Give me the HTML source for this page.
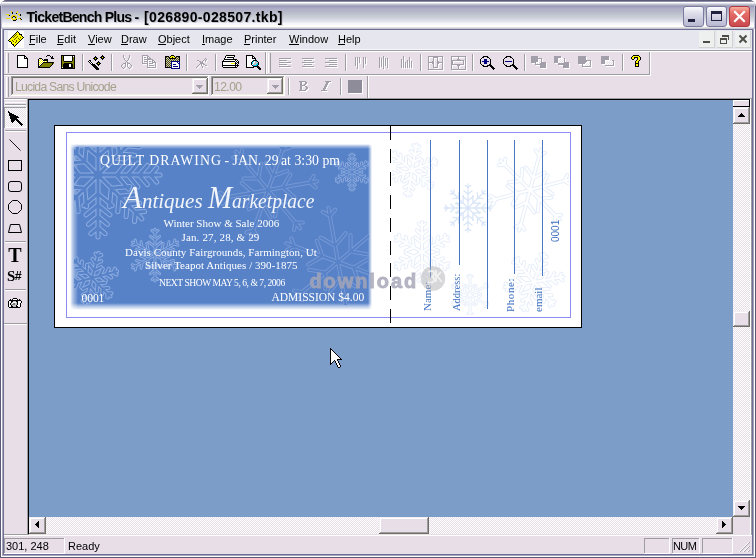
<!DOCTYPE html>
<html><head><meta charset="utf-8">
<style>
*{margin:0;padding:0;box-sizing:border-box}
html,body{width:756px;height:558px;overflow:hidden;background:#fff}
body{position:relative;will-change:transform;font-family:"Liberation Sans",sans-serif;font-size:11px;color:#000}
.a{position:absolute}
.px{position:absolute;overflow:visible}
svg{position:absolute;overflow:visible}
.mi{position:absolute;top:33px;font-size:11px;line-height:13px;color:#000;white-space:nowrap}
.dither{background-color:#FFFFFF;background-image:linear-gradient(45deg,#E8DEE8 25%,transparent 25%,transparent 75%,#E8DEE8 75%),linear-gradient(45deg,#E8DEE8 25%,transparent 25%,transparent 75%,#E8DEE8 75%);background-size:2px 2px;background-position:0 0,1px 1px}
.tk{position:absolute;white-space:nowrap;color:#fff;font-family:"Liberation Serif",serif;line-height:1}
</style></head><body>
<div class="a" style="left:0px;top:0px;width:756px;height:558px;background:#5A5A78;border-radius:7px 7px 0 0"></div><div class="a" style="left:0;top:0;width:756px;height:29px;border-radius:7px 7px 0 0;background:linear-gradient(to bottom,#5C5C78 0px,#5C5C78 1px,#8C8CA4 1px,#8C8CA4 2px,#FFFFFF 2px,#FFFFFF 3px,#DCE0EA 3px,#DCE0EA 4px,#C2C2CE 4px,#C2C2CE 5px,#A8A8BA 5px,#A8A8BA 6px,#9C9CBC 6px,#9C9CBC 7px,#A6A6C4 7px,#A6A6C4 8px,#ACACC6 8px,#ACACC6 9px,#B0B0C8 9px,#B0B0C8 10px,#B4B4C6 10px,#B4B4C6 11px,#B6B6C8 11px,#B6B6C8 12px,#B8BCCC 12px,#B8BCCC 13px,#BCC0CC 13px,#BCC0CC 14px,#C0C4CC 14px,#C0C4CC 15px,#C4C8D0 15px,#C4C8D0 16px,#C8CCD4 16px,#C8CCD4 17px,#CCCEDA 17px,#CCCEDA 18px,#D0D4DC 18px,#D0D4DC 19px,#D8DCE4 19px,#D8DCE4 20px,#DCDCE8 20px,#DCDCE8 21px,#E4E4EE 21px,#E4E4EE 22px,#ECECF4 22px,#ECECF4 23px,#F6F6F8 23px,#F6F6F8 24px,#F8F8FC 24px,#F8F8FC 25px,#FFFFFF 25px,#FFFFFF 26px,#FFFFFF 26px,#FFFFFF 27px,#E0E0DE 27px,#E0E0DE 28px,#C6C6D4 28px,#C6C6D4 29px)"></div><div class="a" style="left:1px;top:29px;width:1px;height:528px;background:#FFFFFF;"></div><div class="a" style="left:2px;top:29px;width:1px;height:527px;background:#A6A6BE;"></div><div class="a" style="left:754px;top:29px;width:1px;height:528px;background:#FFFFFF;"></div><div class="a" style="left:753px;top:29px;width:1px;height:527px;background:#A6A6BE;"></div><div class="a" style="left:1px;top:556px;width:754px;height:1px;background:#FFFFFF;"></div><div class="a" style="left:2px;top:555px;width:752px;height:1px;background:#A6A6BE;"></div><div class="a" style="left:3px;top:29px;width:750px;height:526px;background:#707094;"></div><div class="a" style="left:0px;top:6px;width:1px;height:23px;background:#5C5C78;"></div><div class="a" style="left:755px;top:6px;width:1px;height:23px;background:#5C5C78;"></div><div class="a" style="left:1px;top:4px;width:1px;height:25px;background:#C0C0D2;"></div><div class="a" style="left:754px;top:4px;width:1px;height:25px;background:#C0C0D2;"></div><svg class="px" style="left:6px;top:11px" width="16" height="10" shape-rendering="crispEdges"><path fill="#F0D800" d="M5 0h1v1h-1zM11 0h1v1h-1zM5 1h1v1h-1zM10 1h2v1h-2zM0 3h3v1h-3zM12 3h2v1h-2zM2 4h1v1h-1zM6 4h4v1h-4zM13 4h1v1h-1zM5 5h2v1h-2zM9 5h2v1h-2zM5 6h1v1h-1zM10 6h1v1h-1zM0 7h4v1h-4zM5 7h2v1h-2zM9 7h2v1h-2zM12 7h2v1h-2zM6 8h4v1h-4zM14 8h1v1h-1z"/><path fill="#000000" d="M6 1h1v1h-1zM6 2h1v1h-1zM10 2h1v1h-1zM14 3h1v1h-1zM3 4h1v1h-1zM14 4h1v1h-1zM7 5h2v1h-2zM6 6h1v1h-1zM9 6h1v1h-1zM14 7h1v1h-1zM10 8h1v1h-1zM15 8h1v1h-1zM7 9h3v1h-3z"/></svg><div class="a" style="left:26.5px;top:8px;font-size:14px;letter-spacing:-0.72px;font-weight:bold;line-height:18px;white-space:nowrap;text-shadow:1px 1px 0 rgba(60,60,90,0.18)">TicketBench Plus</div><div class="a" style="left:134.5px;top:8px;font-size:14px;font-weight:bold;line-height:18px;white-space:nowrap;text-shadow:1px 1px 0 rgba(60,60,90,0.18)">-</div><div class="a" style="left:144px;top:8px;font-size:14px;letter-spacing:0.34px;font-weight:bold;line-height:18px;white-space:nowrap;text-shadow:1px 1px 0 rgba(60,60,90,0.18)">[026890-028507.tkb]</div><div class="a" style="left:683px;top:6px;width:21px;height:21px;border-radius:3px;border:1px solid #7A7AA0;background:linear-gradient(to bottom,#FAFAFE 0%,#E0E0EC 30%,#C8C8DC 70%,#B8B8D0 100%)"></div><div class="a" style="left:706px;top:6px;width:21px;height:21px;border-radius:3px;border:1px solid #7A7AA0;background:linear-gradient(to bottom,#FAFAFE 0%,#E0E0EC 30%,#C8C8DC 70%,#B8B8D0 100%)"></div><div class="a" style="left:688px;top:19px;width:7px;height:3px;background:#22223E;"></div><div class="a" style="left:711px;top:11px;width:11px;height:10px;border:1px solid #22223E;border-top-width:3px"></div><div class="a" style="left:729px;top:6px;width:21px;height:21px;border-radius:3px;border:1px solid #B03840;background:linear-gradient(to bottom,#F8B0A0 0%,#E6706A 30%,#D65858 70%,#C84A4E 100%)"></div><svg style="left:729px;top:6px" width="21" height="21"><path d="M6 6 L15 15 M15 6 L6 15" stroke="#fff" stroke-width="2.2" stroke-linecap="square"/></svg><div class="a" style="left:4px;top:30px;width:748px;height:19px;background:#E6E6EE;"></div><div class="a" style="left:4px;top:49px;width:748px;height:1px;background:#F8F8FB;"></div><div class="a" style="left:8px;top:31px;width:16px;height:17px;background:#FDFDFF;"></div><svg class="px" style="left:8px;top:31px" width="16" height="16" shape-rendering="crispEdges"><path fill="#000000" d="M9 0h1v1h-1zM8 1h1v1h-1zM10 1h1v1h-1zM7 2h1v1h-1zM11 2h1v1h-1zM6 3h1v1h-1zM11 3h3v1h-3zM5 4h1v1h-1zM13 4h1v1h-1zM4 5h1v1h-1zM14 5h1v1h-1zM3 6h1v1h-1zM15 6h1v1h-1zM2 7h1v1h-1zM14 7h1v1h-1zM1 8h1v1h-1zM13 8h1v1h-1zM0 9h1v1h-1zM12 9h1v1h-1zM1 10h2v1h-2zM11 10h1v1h-1zM3 11h1v1h-1zM10 11h1v1h-1zM3 12h1v1h-1zM9 12h1v1h-1zM4 13h2v1h-2zM8 13h1v1h-1zM5 14h1v1h-1zM7 14h1v1h-1zM6 15h1v1h-1z"/><path fill="#FFFF00" d="M9 1h1v1h-1zM8 2h3v1h-3zM7 3h1v1h-1zM9 3h2v1h-2zM6 4h1v1h-1zM8 4h5v1h-5zM5 5h1v1h-1zM7 5h2v1h-2zM10 5h4v1h-4zM4 6h1v1h-1zM6 6h2v1h-2zM9 6h3v1h-3zM13 6h2v1h-2zM3 7h4v1h-4zM8 7h2v1h-2zM11 7h3v1h-3zM2 8h4v1h-4zM7 8h4v1h-4zM12 8h1v1h-1zM1 9h3v1h-3zM5 9h3v1h-3zM9 9h3v1h-3zM3 10h2v1h-2zM6 10h2v1h-2zM9 10h2v1h-2zM4 11h3v1h-3zM8 11h2v1h-2zM4 12h5v1h-5zM6 13h2v1h-2zM6 14h1v1h-1z"/><path fill="#5A5600" d="M8 3h1v1h-1zM7 4h1v1h-1zM6 5h1v1h-1zM9 5h1v1h-1zM5 6h1v1h-1zM8 6h1v1h-1zM12 6h1v1h-1zM7 7h1v1h-1zM10 7h1v1h-1zM6 8h1v1h-1zM11 8h1v1h-1zM4 9h1v1h-1zM8 9h1v1h-1zM5 10h1v1h-1zM8 10h1v1h-1zM7 11h1v1h-1z"/></svg><div class="mi" style="left:29px">File</div><div class="a" style="left:29px;top:44px;width:6px;height:1px;background:#000;"></div><div class="mi" style="left:57px">Edit</div><div class="a" style="left:57px;top:44px;width:6px;height:1px;background:#000;"></div><div class="mi" style="left:88px">View</div><div class="a" style="left:88px;top:44px;width:7px;height:1px;background:#000;"></div><div class="mi" style="left:121px">Draw</div><div class="a" style="left:121px;top:44px;width:7px;height:1px;background:#000;"></div><div class="mi" style="left:158px">Object</div><div class="a" style="left:158px;top:44px;width:8px;height:1px;background:#000;"></div><div class="mi" style="left:202px">Image</div><div class="a" style="left:202px;top:44px;width:3px;height:1px;background:#000;"></div><div class="mi" style="left:244px">Printer</div><div class="a" style="left:244px;top:44px;width:6px;height:1px;background:#000;"></div><div class="mi" style="left:289px">Window</div><div class="a" style="left:289px;top:44px;width:10px;height:1px;background:#000;"></div><div class="mi" style="left:338px">Help</div><div class="a" style="left:338px;top:44px;width:7px;height:1px;background:#000;"></div><div class="a" style="left:699px;top:31px;width:16px;height:17px;background:#EEF0F0;border-right:1px solid #D2D2CE;border-bottom:1px solid #D2D2CE"></div><div class="a" style="left:717px;top:31px;width:16px;height:17px;background:#EEF0F0;border-right:1px solid #D2D2CE;border-bottom:1px solid #D2D2CE"></div><div class="a" style="left:735px;top:31px;width:16px;height:17px;background:#EEF0F0;border-right:1px solid #D2D2CE;border-bottom:1px solid #D2D2CE"></div><div class="a" style="left:703px;top:41px;width:7px;height:2px;background:#4E4E46;"></div><div class="a" style="left:720px;top:38px;width:7px;height:6px;border:1px solid #4E4E46;border-top-width:2px"></div><div class="a" style="left:722px;top:35px;width:7px;height:5px;border-top:2px solid #4E4E46;border-right:1px solid #4E4E46"></div><svg style="left:735px;top:31px" width="16" height="16"><path d="M4.5 4.5 L11.5 11.5 M11.5 4.5 L4.5 11.5" stroke="#4E4E46" stroke-width="2"/></svg><div class="a" style="left:4px;top:50px;width:748px;height:48px;background:#E8DEE8;"></div><div class="a" style="left:4px;top:50px;width:748px;height:1px;background:#9D9DA1;"></div><div class="a" style="left:4px;top:51px;width:748px;height:1px;background:#FFFFFF;"></div><div class="a" style="left:4px;top:74px;width:646px;height:1px;background:#9D9DA1;"></div><div class="a" style="left:4px;top:75px;width:647px;height:1px;background:#FFFFFF;"></div><div class="a" style="left:4px;top:98px;width:748px;height:1px;background:#9D9DA1;"></div><div class="a" style="left:265px;top:52px;width:1px;height:22px;background:#9D9DA1;"></div><div class="a" style="left:649px;top:52px;width:1px;height:23px;background:#9D9DA1;"></div><div class="a" style="left:650px;top:52px;width:1px;height:24px;background:#FFFFFF;"></div><div class="a" style="left:367px;top:76px;width:1px;height:22px;background:#9D9DA1;"></div><div class="a" style="left:368px;top:76px;width:1px;height:22px;background:#FFFFFF;"></div><div class="a" style="left:6px;top:53px;width:1px;height:20px;background:#FFFFFF;"></div><div class="a" style="left:8px;top:53px;width:1px;height:20px;background:#9D9DA1;"></div><div class="a" style="left:268px;top:53px;width:1px;height:20px;background:#FFFFFF;"></div><div class="a" style="left:270px;top:53px;width:1px;height:20px;background:#9D9DA1;"></div><div class="a" style="left:6px;top:77px;width:1px;height:20px;background:#FFFFFF;"></div><div class="a" style="left:8px;top:77px;width:1px;height:20px;background:#9D9DA1;"></div><div class="a" style="left:266px;top:52px;width:1px;height:22px;background:#FFFFFF;"></div><svg class="px" style="left:17px;top:55px" width="11" height="13" shape-rendering="crispEdges"><path fill="#000000" d="M0 0h8v1h-8zM0 1h1v1h-1zM7 1h2v1h-2zM0 2h1v1h-1zM7 2h1v1h-1zM9 2h1v1h-1zM0 3h1v1h-1zM7 3h4v1h-4zM0 4h1v1h-1zM10 4h1v1h-1zM0 5h1v1h-1zM10 5h1v1h-1zM0 6h1v1h-1zM10 6h1v1h-1zM0 7h1v1h-1zM10 7h1v1h-1zM0 8h1v1h-1zM10 8h1v1h-1zM0 9h1v1h-1zM10 9h1v1h-1zM0 10h1v1h-1zM10 10h1v1h-1zM0 11h1v1h-1zM10 11h1v1h-1zM0 12h11v1h-11z"/><path fill="#FFFFFF" d="M1 1h6v1h-6zM1 2h6v1h-6zM8 2h1v1h-1zM1 3h6v1h-6zM1 4h9v1h-9zM1 5h9v1h-9zM1 6h9v1h-9zM1 7h9v1h-9zM1 8h9v1h-9zM1 9h9v1h-9zM1 10h9v1h-9zM1 11h9v1h-9z"/></svg><svg class="px" style="left:38px;top:55px" width="16" height="13" shape-rendering="crispEdges"><path fill="#000000" d="M9 0h3v1h-3zM8 1h1v1h-1zM12 1h1v1h-1zM14 1h1v1h-1zM13 2h2v1h-2zM1 3h3v1h-3zM13 3h3v1h-3zM0 4h1v1h-1zM4 4h1v1h-1zM6 4h4v1h-4zM0 5h1v1h-1zM5 5h5v1h-5zM0 6h1v1h-1zM9 6h1v1h-1zM0 7h1v1h-1zM5 7h11v1h-11zM0 8h1v1h-1zM4 8h1v1h-1zM14 8h1v1h-1zM0 9h1v1h-1zM3 9h1v1h-1zM14 9h1v1h-1zM0 10h1v1h-1zM2 10h1v1h-1zM13 10h1v1h-1zM0 11h2v1h-2zM12 11h1v1h-1zM0 12h12v1h-12z"/><path fill="#FFFFFF" d="M1 4h1v1h-1zM3 4h1v1h-1zM2 5h1v1h-1zM4 5h1v1h-1zM1 6h1v1h-1zM3 6h1v1h-1zM5 6h1v1h-1zM7 6h1v1h-1zM2 7h1v1h-1zM4 7h1v1h-1zM1 8h1v1h-1zM3 8h1v1h-1zM2 9h1v1h-1zM1 10h1v1h-1z"/><path fill="#FFFF00" d="M2 4h1v1h-1zM1 5h1v1h-1zM3 5h1v1h-1zM2 6h1v1h-1zM4 6h1v1h-1zM6 6h1v1h-1zM8 6h1v1h-1zM1 7h1v1h-1zM3 7h1v1h-1zM2 8h1v1h-1zM1 9h1v1h-1z"/><path fill="#808000" d="M5 8h9v1h-9zM15 8h1v1h-1zM4 9h10v1h-10zM3 10h10v1h-10zM2 11h10v1h-10z"/></svg><svg class="px" style="left:61px;top:55px" width="14" height="14" shape-rendering="crispEdges"><path fill="#000000" d="M0 0h14v1h-14zM0 1h1v1h-1zM2 1h1v1h-1zM11 1h1v1h-1zM13 1h1v1h-1zM0 2h1v1h-1zM2 2h1v1h-1zM11 2h1v1h-1zM13 2h1v1h-1zM0 3h1v1h-1zM2 3h1v1h-1zM11 3h1v1h-1zM13 3h1v1h-1zM0 4h1v1h-1zM2 4h1v1h-1zM11 4h1v1h-1zM13 4h1v1h-1zM0 5h1v1h-1zM2 5h1v1h-1zM11 5h1v1h-1zM13 5h1v1h-1zM0 6h1v1h-1zM3 6h8v1h-8zM13 6h1v1h-1zM0 7h1v1h-1zM13 7h1v1h-1zM0 8h1v1h-1zM3 8h8v1h-8zM13 8h1v1h-1zM0 9h1v1h-1zM2 9h6v1h-6zM10 9h2v1h-2zM13 9h1v1h-1zM0 10h1v1h-1zM2 10h6v1h-6zM10 10h2v1h-2zM13 10h1v1h-1zM0 11h1v1h-1zM2 11h6v1h-6zM10 11h2v1h-2zM13 11h1v1h-1zM0 12h1v1h-1zM2 12h10v1h-10zM13 12h1v1h-1zM0 13h14v1h-14z"/><path fill="#808000" d="M1 1h1v1h-1zM1 2h1v1h-1zM12 2h1v1h-1zM1 3h1v1h-1zM12 3h1v1h-1zM1 4h1v1h-1zM12 4h1v1h-1zM1 5h1v1h-1zM12 5h1v1h-1zM1 6h2v1h-2zM11 6h2v1h-2zM1 7h12v1h-12zM1 8h2v1h-2zM11 8h2v1h-2zM1 9h1v1h-1zM12 9h1v1h-1zM1 10h1v1h-1zM12 10h1v1h-1zM1 11h1v1h-1zM12 11h1v1h-1zM12 12h1v1h-1z"/><path fill="#FFFFFF" d="M3 1h8v1h-8zM12 1h1v1h-1zM3 2h8v1h-8zM3 3h8v1h-8zM3 4h8v1h-8zM3 5h8v1h-8zM8 9h2v1h-2zM8 10h2v1h-2zM8 11h2v1h-2zM1 12h1v1h-1z"/></svg><div class="a" style="left:82px;top:54px;width:1px;height:17px;background:#9D9DA1;"></div><div class="a" style="left:83px;top:54px;width:1px;height:17px;background:#FFFFFF;"></div><svg class="px" style="left:88px;top:55px" width="18" height="15" shape-rendering="crispEdges"><path fill="#000000" d="M14 0h1v1h-1zM7 1h1v1h-1zM13 1h3v1h-3zM6 2h3v1h-3zM12 2h2v1h-2zM15 2h2v1h-2zM5 3h2v1h-2zM8 3h2v1h-2zM13 3h3v1h-3zM6 4h3v1h-3zM14 4h1v1h-1zM1 5h2v1h-2zM7 5h1v1h-1zM0 6h1v1h-1zM2 6h1v1h-1zM10 6h1v1h-1zM1 7h1v1h-1zM3 7h1v1h-1zM9 7h3v1h-3zM2 8h1v1h-1zM4 8h1v1h-1zM8 8h2v1h-2zM11 8h2v1h-2zM3 9h4v1h-4zM9 9h3v1h-3zM4 10h4v1h-4zM10 10h1v1h-1zM5 11h4v1h-4zM6 12h4v1h-4zM7 13h4v1h-4zM8 14h3v1h-3z"/><path fill="#FFFF00" d="M14 2h1v1h-1zM7 3h1v1h-1zM10 8h1v1h-1z"/><path fill="#FFFFFF" d="M1 6h1v1h-1zM3 6h1v1h-1zM2 7h1v1h-1zM4 7h1v1h-1zM3 8h1v1h-1zM5 8h1v1h-1z"/></svg><div class="a" style="left:111px;top:54px;width:1px;height:17px;background:#9D9DA1;"></div><div class="a" style="left:112px;top:54px;width:1px;height:17px;background:#FFFFFF;"></div><svg class="px" style="left:122px;top:56px" width="11" height="14" shape-rendering="crispEdges"><path fill="#FFFFFF" d="M2 0h1v1h-1zM8 0h1v1h-1zM2 1h1v1h-1zM8 1h1v1h-1zM2 2h1v1h-1zM8 2h1v1h-1zM3 3h1v1h-1zM7 3h1v1h-1zM3 4h1v1h-1zM7 4h1v1h-1zM4 5h1v1h-1zM6 5h1v1h-1zM5 6h1v1h-1zM4 7h1v1h-1zM6 7h1v1h-1zM2 8h3v1h-3zM6 8h3v1h-3zM1 9h1v1h-1zM4 9h1v1h-1zM6 9h1v1h-1zM9 9h1v1h-1zM0 10h1v1h-1zM4 10h1v1h-1zM6 10h1v1h-1zM10 10h1v1h-1zM0 11h1v1h-1zM4 11h1v1h-1zM6 11h1v1h-1zM10 11h1v1h-1zM1 12h1v1h-1zM3 12h1v1h-1zM7 12h1v1h-1zM9 12h1v1h-1zM2 13h1v1h-1zM8 13h1v1h-1z"/></svg><svg class="px" style="left:121px;top:55px" width="11" height="14" shape-rendering="crispEdges"><path fill="#A29EAA" d="M2 0h1v1h-1zM8 0h1v1h-1zM2 1h1v1h-1zM8 1h1v1h-1zM2 2h1v1h-1zM8 2h1v1h-1zM3 3h1v1h-1zM7 3h1v1h-1zM3 4h1v1h-1zM7 4h1v1h-1zM4 5h1v1h-1zM6 5h1v1h-1zM5 6h1v1h-1zM4 7h1v1h-1zM6 7h1v1h-1zM2 8h3v1h-3zM6 8h3v1h-3zM1 9h1v1h-1zM4 9h1v1h-1zM6 9h1v1h-1zM9 9h1v1h-1zM0 10h1v1h-1zM4 10h1v1h-1zM6 10h1v1h-1zM10 10h1v1h-1zM0 11h1v1h-1zM4 11h1v1h-1zM6 11h1v1h-1zM10 11h1v1h-1zM1 12h1v1h-1zM3 12h1v1h-1zM7 12h1v1h-1zM9 12h1v1h-1zM2 13h1v1h-1zM8 13h1v1h-1z"/></svg><svg class="px" style="left:143px;top:56px" width="14" height="13" shape-rendering="crispEdges"><path fill="#FFFFFF" d="M0 0h6v1h-6zM0 1h1v1h-1zM5 1h2v1h-2zM0 2h1v1h-1zM2 2h2v1h-2zM5 2h1v1h-1zM7 2h1v1h-1zM0 3h1v1h-1zM5 3h4v1h-4zM0 4h1v1h-1zM2 4h9v1h-9zM0 5h1v1h-1zM5 5h1v1h-1zM10 5h2v1h-2zM0 6h1v1h-1zM2 6h4v1h-4zM7 6h2v1h-2zM10 6h1v1h-1zM12 6h1v1h-1zM0 7h1v1h-1zM5 7h1v1h-1zM10 7h4v1h-4zM0 8h6v1h-6zM7 8h4v1h-4zM13 8h1v1h-1zM5 9h1v1h-1zM13 9h1v1h-1zM5 10h1v1h-1zM7 10h5v1h-5zM13 10h1v1h-1zM5 11h1v1h-1zM13 11h1v1h-1zM5 12h9v1h-9z"/></svg><svg class="px" style="left:142px;top:55px" width="14" height="13" shape-rendering="crispEdges"><path fill="#A29EAA" d="M0 0h6v1h-6zM0 1h1v1h-1zM5 1h2v1h-2zM0 2h1v1h-1zM2 2h2v1h-2zM5 2h1v1h-1zM7 2h1v1h-1zM0 3h1v1h-1zM5 3h4v1h-4zM0 4h1v1h-1zM2 4h9v1h-9zM0 5h1v1h-1zM5 5h1v1h-1zM10 5h2v1h-2zM0 6h1v1h-1zM2 6h4v1h-4zM7 6h2v1h-2zM10 6h1v1h-1zM12 6h1v1h-1zM0 7h1v1h-1zM5 7h1v1h-1zM10 7h4v1h-4zM0 8h6v1h-6zM7 8h4v1h-4zM13 8h1v1h-1zM5 9h1v1h-1zM13 9h1v1h-1zM5 10h1v1h-1zM7 10h5v1h-5zM13 10h1v1h-1zM5 11h1v1h-1zM13 11h1v1h-1zM5 12h9v1h-9z"/></svg><svg class="px" style="left:165px;top:55px" width="16" height="14" shape-rendering="crispEdges"><path fill="#000000" d="M6 0h3v1h-3zM0 1h4v1h-4zM5 1h1v1h-1zM9 1h1v1h-1zM11 1h4v1h-4zM0 2h1v1h-1zM4 2h1v1h-1zM7 2h1v1h-1zM10 2h1v1h-1zM14 2h1v1h-1zM0 3h1v1h-1zM4 3h7v1h-7zM14 3h1v1h-1zM0 4h1v1h-1zM14 4h1v1h-1zM0 5h1v1h-1zM14 5h1v1h-1zM0 6h1v1h-1zM0 7h1v1h-1zM0 8h1v1h-1zM0 9h1v1h-1zM0 10h1v1h-1zM0 11h1v1h-1zM0 12h6v1h-6z"/><path fill="#FFFF00" d="M6 1h3v1h-3zM5 2h2v1h-2zM8 2h2v1h-2z"/><path fill="#5A5600" d="M1 2h1v1h-1zM3 2h1v1h-1zM11 2h1v1h-1zM13 2h1v1h-1zM2 3h1v1h-1zM12 3h1v1h-1zM1 4h1v1h-1zM3 4h1v1h-1zM5 4h1v1h-1zM7 4h1v1h-1zM9 4h1v1h-1zM11 4h1v1h-1zM13 4h1v1h-1zM2 5h1v1h-1zM4 5h1v1h-1zM6 5h1v1h-1zM8 5h1v1h-1zM10 5h1v1h-1zM12 5h1v1h-1zM1 6h1v1h-1zM3 6h1v1h-1zM5 6h1v1h-1zM2 7h1v1h-1zM4 7h1v1h-1zM1 8h1v1h-1zM3 8h1v1h-1zM5 8h1v1h-1zM2 9h1v1h-1zM4 9h1v1h-1zM1 10h1v1h-1zM3 10h1v1h-1zM5 10h1v1h-1zM2 11h1v1h-1zM4 11h1v1h-1z"/><path fill="#C0C0C0" d="M2 2h1v1h-1zM12 2h1v1h-1zM1 3h1v1h-1zM3 3h1v1h-1zM11 3h1v1h-1zM13 3h1v1h-1zM2 4h1v1h-1zM4 4h1v1h-1zM6 4h1v1h-1zM8 4h1v1h-1zM10 4h1v1h-1zM12 4h1v1h-1zM1 5h1v1h-1zM3 5h1v1h-1zM5 5h1v1h-1zM7 5h1v1h-1zM9 5h1v1h-1zM11 5h1v1h-1zM13 5h1v1h-1zM2 6h1v1h-1zM4 6h1v1h-1zM1 7h1v1h-1zM3 7h1v1h-1zM5 7h1v1h-1zM2 8h1v1h-1zM4 8h1v1h-1zM1 9h1v1h-1zM3 9h1v1h-1zM5 9h1v1h-1zM2 10h1v1h-1zM4 10h1v1h-1zM1 11h1v1h-1zM3 11h1v1h-1zM5 11h1v1h-1z"/><path fill="#000080" d="M6 6h9v1h-9zM6 7h1v1h-1zM12 7h1v1h-1zM14 7h1v1h-1zM6 8h1v1h-1zM13 8h2v1h-2zM6 9h1v1h-1zM8 9h3v1h-3zM14 9h1v1h-1zM6 10h1v1h-1zM14 10h1v1h-1zM6 11h1v1h-1zM8 11h5v1h-5zM14 11h1v1h-1zM6 12h1v1h-1zM14 12h1v1h-1zM6 13h9v1h-9z"/><path fill="#FFFFFF" d="M7 7h5v1h-5zM13 7h1v1h-1zM7 8h6v1h-6zM7 9h1v1h-1zM11 9h3v1h-3zM7 10h7v1h-7zM7 11h1v1h-1zM13 11h1v1h-1zM7 12h7v1h-7z"/></svg><div class="a" style="left:186px;top:54px;width:1px;height:17px;background:#9D9DA1;"></div><div class="a" style="left:187px;top:54px;width:1px;height:17px;background:#FFFFFF;"></div><svg class="px" style="left:197px;top:59px" width="11" height="10" shape-rendering="crispEdges"><path fill="#FFFFFF" d="M9 0h1v1h-1zM8 1h1v1h-1zM10 1h1v1h-1zM1 2h2v1h-2zM7 2h1v1h-1zM9 2h1v1h-1zM3 3h2v1h-2zM6 3h1v1h-1zM9 3h1v1h-1zM4 4h3v1h-3zM4 5h4v1h-4zM3 6h1v1h-1zM5 6h1v1h-1zM7 6h2v1h-2zM2 7h1v1h-1zM5 7h1v1h-1zM9 7h2v1h-2zM1 8h1v1h-1zM6 8h1v1h-1zM0 9h1v1h-1zM6 9h1v1h-1z"/></svg><svg class="px" style="left:196px;top:58px" width="11" height="10" shape-rendering="crispEdges"><path fill="#A29EAA" d="M9 0h1v1h-1zM8 1h1v1h-1zM10 1h1v1h-1zM1 2h2v1h-2zM7 2h1v1h-1zM9 2h1v1h-1zM3 3h2v1h-2zM6 3h1v1h-1zM9 3h1v1h-1zM4 4h3v1h-3zM4 5h4v1h-4zM3 6h1v1h-1zM5 6h1v1h-1zM7 6h2v1h-2zM2 7h1v1h-1zM5 7h1v1h-1zM9 7h2v1h-2zM1 8h1v1h-1zM6 8h1v1h-1zM0 9h1v1h-1zM6 9h1v1h-1z"/></svg><div class="a" style="left:215px;top:54px;width:1px;height:17px;background:#9D9DA1;"></div><div class="a" style="left:216px;top:54px;width:1px;height:17px;background:#FFFFFF;"></div><svg class="px" style="left:222px;top:55px" width="17" height="13" shape-rendering="crispEdges"><path fill="#000000" d="M4 0h9v1h-9zM3 1h1v1h-1zM12 1h1v1h-1zM3 2h1v1h-1zM5 2h7v1h-7zM2 3h1v1h-1zM11 3h1v1h-1zM2 4h13v1h-13zM1 5h1v1h-1zM13 5h1v1h-1zM15 5h1v1h-1zM0 6h13v1h-13zM14 6h1v1h-1zM16 6h1v1h-1zM0 7h1v1h-1zM13 7h1v1h-1zM15 7h2v1h-2zM0 8h1v1h-1zM13 8h2v1h-2zM16 8h1v1h-1zM0 9h1v1h-1zM13 9h1v1h-1zM15 9h1v1h-1zM0 10h17v1h-17zM0 11h1v1h-1zM13 11h1v1h-1zM15 11h1v1h-1zM1 12h14v1h-14z"/><path fill="#FFFFFF" d="M4 1h8v1h-8zM4 2h1v1h-1zM3 3h8v1h-8zM2 5h11v1h-11zM14 5h1v1h-1zM13 6h1v1h-1zM15 6h1v1h-1zM1 7h12v1h-12zM14 7h1v1h-1zM1 8h8v1h-8zM15 8h1v1h-1zM1 9h12v1h-12zM14 9h1v1h-1zM1 11h12v1h-12zM14 11h1v1h-1z"/><path fill="#FFFF00" d="M9 8h4v1h-4z"/></svg><svg class="px" style="left:246px;top:55px" width="16" height="15" shape-rendering="crispEdges"><path fill="#000000" d="M0 0h7v1h-7zM0 1h1v1h-1zM6 1h2v1h-2zM0 2h1v1h-1zM6 2h1v1h-1zM8 2h1v1h-1zM0 3h1v1h-1zM6 3h4v1h-4zM0 4h1v1h-1zM9 4h1v1h-1zM0 5h1v1h-1zM7 5h4v1h-4zM0 6h1v1h-1zM6 6h1v1h-1zM11 6h1v1h-1zM0 7h1v1h-1zM5 7h1v1h-1zM12 7h1v1h-1zM0 8h1v1h-1zM5 8h1v1h-1zM12 8h1v1h-1zM0 9h1v1h-1zM5 9h1v1h-1zM12 9h1v1h-1zM0 10h1v1h-1zM6 10h1v1h-1zM11 10h1v1h-1zM0 11h1v1h-1zM7 11h6v1h-6zM0 12h8v1h-8zM11 12h3v1h-3zM12 13h3v1h-3zM13 14h2v1h-2z"/><path fill="#FFFFFF" d="M1 1h5v1h-5zM1 2h5v1h-5zM7 2h1v1h-1zM1 3h5v1h-5zM1 4h8v1h-8zM1 5h6v1h-6zM1 6h5v1h-5zM8 6h1v1h-1zM1 7h4v1h-4zM7 7h2v1h-2zM1 8h4v1h-4zM7 8h1v1h-1zM1 9h4v1h-4zM6 9h1v1h-1zM1 10h5v1h-5zM1 11h6v1h-6z"/><path fill="#00C8E8" d="M7 6h1v1h-1zM10 6h1v1h-1zM6 7h1v1h-1zM6 8h1v1h-1zM11 8h1v1h-1zM10 9h2v1h-2zM7 10h4v1h-4z"/><path fill="#C0C0C0" d="M9 6h1v1h-1zM9 7h3v1h-3zM8 8h3v1h-3zM7 9h3v1h-3z"/></svg><svg class="px" style="left:280px;top:59px" width="12" height="9" shape-rendering="crispEdges"><path fill="#FFFFFF" d="M0 0h12v1h-12zM0 2h8v1h-8zM0 4h12v1h-12zM0 6h8v1h-8zM0 8h12v1h-12z"/></svg><svg class="px" style="left:279px;top:58px" width="12" height="9" shape-rendering="crispEdges"><path fill="#A29EAA" d="M0 0h12v1h-12zM0 2h8v1h-8zM0 4h12v1h-12zM0 6h8v1h-8zM0 8h12v1h-12z"/></svg><svg class="px" style="left:303px;top:59px" width="12" height="9" shape-rendering="crispEdges"><path fill="#FFFFFF" d="M0 0h12v1h-12zM2 2h8v1h-8zM0 4h12v1h-12zM2 6h8v1h-8zM0 8h12v1h-12z"/></svg><svg class="px" style="left:302px;top:58px" width="12" height="9" shape-rendering="crispEdges"><path fill="#A29EAA" d="M0 0h12v1h-12zM2 2h8v1h-8zM0 4h12v1h-12zM2 6h8v1h-8zM0 8h12v1h-12z"/></svg><svg class="px" style="left:326px;top:59px" width="12" height="9" shape-rendering="crispEdges"><path fill="#FFFFFF" d="M0 0h12v1h-12zM4 2h8v1h-8zM0 4h12v1h-12zM4 6h8v1h-8zM0 8h12v1h-12z"/></svg><svg class="px" style="left:325px;top:58px" width="12" height="9" shape-rendering="crispEdges"><path fill="#A29EAA" d="M0 0h12v1h-12zM4 2h8v1h-8zM0 4h12v1h-12zM4 6h8v1h-8zM0 8h12v1h-12z"/></svg><div class="a" style="left:345px;top:54px;width:1px;height:17px;background:#9D9DA1;"></div><div class="a" style="left:346px;top:54px;width:1px;height:17px;background:#FFFFFF;"></div><svg class="px" style="left:356px;top:58px" width="11" height="12" shape-rendering="crispEdges"><path fill="#FFFFFF" d="M0 0h1v1h-1zM2 0h1v1h-1zM4 0h1v1h-1zM8 0h1v1h-1zM10 0h1v1h-1zM0 1h1v1h-1zM2 1h1v1h-1zM4 1h1v1h-1zM8 1h1v1h-1zM10 1h1v1h-1zM0 2h1v1h-1zM2 2h1v1h-1zM4 2h1v1h-1zM8 2h1v1h-1zM10 2h1v1h-1zM0 3h1v1h-1zM2 3h1v1h-1zM4 3h1v1h-1zM8 3h1v1h-1zM10 3h1v1h-1zM0 4h1v1h-1zM2 4h1v1h-1zM4 4h1v1h-1zM8 4h1v1h-1zM10 4h1v1h-1zM0 5h1v1h-1zM2 5h1v1h-1zM4 5h1v1h-1zM8 5h1v1h-1zM10 5h1v1h-1zM0 6h1v1h-1zM2 6h1v1h-1zM8 6h1v1h-1zM10 6h1v1h-1zM0 7h1v1h-1zM2 7h1v1h-1zM8 7h1v1h-1zM0 8h1v1h-1zM2 8h1v1h-1zM8 8h1v1h-1zM2 9h1v1h-1zM8 9h1v1h-1zM2 10h1v1h-1zM8 10h1v1h-1zM2 11h1v1h-1z"/></svg><svg class="px" style="left:355px;top:57px" width="11" height="12" shape-rendering="crispEdges"><path fill="#A29EAA" d="M0 0h1v1h-1zM2 0h1v1h-1zM4 0h1v1h-1zM8 0h1v1h-1zM10 0h1v1h-1zM0 1h1v1h-1zM2 1h1v1h-1zM4 1h1v1h-1zM8 1h1v1h-1zM10 1h1v1h-1zM0 2h1v1h-1zM2 2h1v1h-1zM4 2h1v1h-1zM8 2h1v1h-1zM10 2h1v1h-1zM0 3h1v1h-1zM2 3h1v1h-1zM4 3h1v1h-1zM8 3h1v1h-1zM10 3h1v1h-1zM0 4h1v1h-1zM2 4h1v1h-1zM4 4h1v1h-1zM8 4h1v1h-1zM10 4h1v1h-1zM0 5h1v1h-1zM2 5h1v1h-1zM4 5h1v1h-1zM8 5h1v1h-1zM10 5h1v1h-1zM0 6h1v1h-1zM2 6h1v1h-1zM8 6h1v1h-1zM10 6h1v1h-1zM0 7h1v1h-1zM2 7h1v1h-1zM8 7h1v1h-1zM0 8h1v1h-1zM2 8h1v1h-1zM8 8h1v1h-1zM2 9h1v1h-1zM8 9h1v1h-1zM2 10h1v1h-1zM8 10h1v1h-1zM2 11h1v1h-1z"/></svg><svg class="px" style="left:380px;top:57px" width="9" height="13" shape-rendering="crispEdges"><path fill="#FFFFFF" d="M4 0h1v1h-1zM0 1h1v1h-1zM4 1h1v1h-1zM0 2h1v1h-1zM2 2h1v1h-1zM4 2h1v1h-1zM6 2h1v1h-1zM8 2h1v1h-1zM0 3h1v1h-1zM2 3h1v1h-1zM4 3h1v1h-1zM6 3h1v1h-1zM8 3h1v1h-1zM0 4h1v1h-1zM2 4h1v1h-1zM4 4h1v1h-1zM6 4h1v1h-1zM8 4h1v1h-1zM0 5h1v1h-1zM2 5h1v1h-1zM4 5h1v1h-1zM6 5h1v1h-1zM8 5h1v1h-1zM0 6h1v1h-1zM2 6h1v1h-1zM4 6h1v1h-1zM6 6h1v1h-1zM8 6h1v1h-1zM0 7h1v1h-1zM2 7h1v1h-1zM4 7h1v1h-1zM6 7h1v1h-1zM8 7h1v1h-1zM0 8h1v1h-1zM2 8h1v1h-1zM4 8h1v1h-1zM6 8h1v1h-1zM8 8h1v1h-1zM0 9h1v1h-1zM2 9h1v1h-1zM4 9h1v1h-1zM6 9h1v1h-1zM8 9h1v1h-1zM0 10h1v1h-1zM2 10h1v1h-1zM4 10h1v1h-1zM8 10h1v1h-1zM0 11h1v1h-1zM4 11h1v1h-1zM8 11h1v1h-1zM4 12h1v1h-1z"/></svg><svg class="px" style="left:379px;top:56px" width="9" height="13" shape-rendering="crispEdges"><path fill="#A29EAA" d="M4 0h1v1h-1zM0 1h1v1h-1zM4 1h1v1h-1zM0 2h1v1h-1zM2 2h1v1h-1zM4 2h1v1h-1zM6 2h1v1h-1zM8 2h1v1h-1zM0 3h1v1h-1zM2 3h1v1h-1zM4 3h1v1h-1zM6 3h1v1h-1zM8 3h1v1h-1zM0 4h1v1h-1zM2 4h1v1h-1zM4 4h1v1h-1zM6 4h1v1h-1zM8 4h1v1h-1zM0 5h1v1h-1zM2 5h1v1h-1zM4 5h1v1h-1zM6 5h1v1h-1zM8 5h1v1h-1zM0 6h1v1h-1zM2 6h1v1h-1zM4 6h1v1h-1zM6 6h1v1h-1zM8 6h1v1h-1zM0 7h1v1h-1zM2 7h1v1h-1zM4 7h1v1h-1zM6 7h1v1h-1zM8 7h1v1h-1zM0 8h1v1h-1zM2 8h1v1h-1zM4 8h1v1h-1zM6 8h1v1h-1zM8 8h1v1h-1zM0 9h1v1h-1zM2 9h1v1h-1zM4 9h1v1h-1zM6 9h1v1h-1zM8 9h1v1h-1zM0 10h1v1h-1zM2 10h1v1h-1zM4 10h1v1h-1zM8 10h1v1h-1zM0 11h1v1h-1zM4 11h1v1h-1zM8 11h1v1h-1zM4 12h1v1h-1z"/></svg><svg class="px" style="left:402px;top:57px" width="11" height="12" shape-rendering="crispEdges"><path fill="#FFFFFF" d="M2 0h1v1h-1zM2 1h1v1h-1zM8 1h1v1h-1zM2 2h1v1h-1zM8 2h1v1h-1zM0 3h1v1h-1zM2 3h1v1h-1zM8 3h1v1h-1zM0 4h1v1h-1zM2 4h1v1h-1zM6 4h1v1h-1zM8 4h1v1h-1zM0 5h1v1h-1zM2 5h1v1h-1zM6 5h1v1h-1zM8 5h1v1h-1zM10 5h1v1h-1zM0 6h1v1h-1zM2 6h1v1h-1zM4 6h1v1h-1zM6 6h1v1h-1zM8 6h1v1h-1zM10 6h1v1h-1zM0 7h1v1h-1zM2 7h1v1h-1zM4 7h1v1h-1zM6 7h1v1h-1zM8 7h1v1h-1zM10 7h1v1h-1zM0 8h1v1h-1zM2 8h1v1h-1zM4 8h1v1h-1zM6 8h1v1h-1zM8 8h1v1h-1zM10 8h1v1h-1zM0 9h1v1h-1zM2 9h1v1h-1zM4 9h1v1h-1zM6 9h1v1h-1zM8 9h1v1h-1zM10 9h1v1h-1zM0 10h1v1h-1zM2 10h1v1h-1zM4 10h1v1h-1zM6 10h1v1h-1zM8 10h1v1h-1zM10 10h1v1h-1zM0 11h1v1h-1zM2 11h1v1h-1zM4 11h1v1h-1zM6 11h1v1h-1zM8 11h1v1h-1zM10 11h1v1h-1z"/></svg><svg class="px" style="left:401px;top:56px" width="11" height="12" shape-rendering="crispEdges"><path fill="#A29EAA" d="M2 0h1v1h-1zM2 1h1v1h-1zM8 1h1v1h-1zM2 2h1v1h-1zM8 2h1v1h-1zM0 3h1v1h-1zM2 3h1v1h-1zM8 3h1v1h-1zM0 4h1v1h-1zM2 4h1v1h-1zM6 4h1v1h-1zM8 4h1v1h-1zM0 5h1v1h-1zM2 5h1v1h-1zM6 5h1v1h-1zM8 5h1v1h-1zM10 5h1v1h-1zM0 6h1v1h-1zM2 6h1v1h-1zM4 6h1v1h-1zM6 6h1v1h-1zM8 6h1v1h-1zM10 6h1v1h-1zM0 7h1v1h-1zM2 7h1v1h-1zM4 7h1v1h-1zM6 7h1v1h-1zM8 7h1v1h-1zM10 7h1v1h-1zM0 8h1v1h-1zM2 8h1v1h-1zM4 8h1v1h-1zM6 8h1v1h-1zM8 8h1v1h-1zM10 8h1v1h-1zM0 9h1v1h-1zM2 9h1v1h-1zM4 9h1v1h-1zM6 9h1v1h-1zM8 9h1v1h-1zM10 9h1v1h-1zM0 10h1v1h-1zM2 10h1v1h-1zM4 10h1v1h-1zM6 10h1v1h-1zM8 10h1v1h-1zM10 10h1v1h-1zM0 11h1v1h-1zM2 11h1v1h-1zM4 11h1v1h-1zM6 11h1v1h-1zM8 11h1v1h-1zM10 11h1v1h-1z"/></svg><div class="a" style="left:420px;top:54px;width:1px;height:17px;background:#9D9DA1;"></div><div class="a" style="left:421px;top:54px;width:1px;height:17px;background:#FFFFFF;"></div><svg class="px" style="left:429px;top:57px" width="15" height="14" shape-rendering="crispEdges"><path fill="#FFFFFF" d="M0 0h15v1h-15zM0 1h1v1h-1zM5 1h5v1h-5zM14 1h1v1h-1zM0 2h1v1h-1zM5 2h1v1h-1zM9 2h1v1h-1zM14 2h1v1h-1zM0 3h1v1h-1zM5 3h1v1h-1zM9 3h1v1h-1zM14 3h1v1h-1zM0 4h1v1h-1zM5 4h1v1h-1zM9 4h1v1h-1zM14 4h1v1h-1zM0 5h1v1h-1zM4 5h2v1h-2zM9 5h2v1h-2zM14 5h1v1h-1zM0 6h6v1h-6zM9 6h6v1h-6zM0 7h1v1h-1zM4 7h2v1h-2zM9 7h2v1h-2zM14 7h1v1h-1zM0 8h1v1h-1zM5 8h1v1h-1zM9 8h1v1h-1zM14 8h1v1h-1zM0 9h1v1h-1zM5 9h1v1h-1zM9 9h1v1h-1zM14 9h1v1h-1zM0 10h1v1h-1zM5 10h1v1h-1zM9 10h1v1h-1zM14 10h1v1h-1zM0 11h1v1h-1zM5 11h5v1h-5zM14 11h1v1h-1zM0 12h1v1h-1zM14 12h1v1h-1zM0 13h15v1h-15z"/></svg><svg class="px" style="left:428px;top:56px" width="15" height="14" shape-rendering="crispEdges"><path fill="#A29EAA" d="M0 0h15v1h-15zM0 1h1v1h-1zM5 1h5v1h-5zM14 1h1v1h-1zM0 2h1v1h-1zM5 2h1v1h-1zM9 2h1v1h-1zM14 2h1v1h-1zM0 3h1v1h-1zM5 3h1v1h-1zM9 3h1v1h-1zM14 3h1v1h-1zM0 4h1v1h-1zM5 4h1v1h-1zM9 4h1v1h-1zM14 4h1v1h-1zM0 5h1v1h-1zM4 5h2v1h-2zM9 5h2v1h-2zM14 5h1v1h-1zM0 6h6v1h-6zM9 6h6v1h-6zM0 7h1v1h-1zM4 7h2v1h-2zM9 7h2v1h-2zM14 7h1v1h-1zM0 8h1v1h-1zM5 8h1v1h-1zM9 8h1v1h-1zM14 8h1v1h-1zM0 9h1v1h-1zM5 9h1v1h-1zM9 9h1v1h-1zM14 9h1v1h-1zM0 10h1v1h-1zM5 10h1v1h-1zM9 10h1v1h-1zM14 10h1v1h-1zM0 11h1v1h-1zM5 11h5v1h-5zM14 11h1v1h-1zM0 12h1v1h-1zM14 12h1v1h-1zM0 13h15v1h-15z"/></svg><svg class="px" style="left:452px;top:57px" width="15" height="14" shape-rendering="crispEdges"><path fill="#FFFFFF" d="M0 0h15v1h-15zM0 1h1v1h-1zM7 1h1v1h-1zM14 1h1v1h-1zM0 2h1v1h-1zM7 2h1v1h-1zM14 2h1v1h-1zM0 3h1v1h-1zM6 3h3v1h-3zM14 3h1v1h-1zM0 4h13v1h-13zM14 4h1v1h-1zM0 5h2v1h-2zM12 5h1v1h-1zM14 5h1v1h-1zM0 6h2v1h-2zM12 6h1v1h-1zM14 6h1v1h-1zM0 7h2v1h-2zM12 7h1v1h-1zM14 7h1v1h-1zM0 8h13v1h-13zM14 8h1v1h-1zM0 9h1v1h-1zM6 9h3v1h-3zM14 9h1v1h-1zM0 10h1v1h-1zM7 10h1v1h-1zM14 10h1v1h-1zM0 11h1v1h-1zM7 11h1v1h-1zM14 11h1v1h-1zM0 12h1v1h-1zM7 12h1v1h-1zM14 12h1v1h-1zM0 13h15v1h-15z"/></svg><svg class="px" style="left:451px;top:56px" width="15" height="14" shape-rendering="crispEdges"><path fill="#A29EAA" d="M0 0h15v1h-15zM0 1h1v1h-1zM7 1h1v1h-1zM14 1h1v1h-1zM0 2h1v1h-1zM7 2h1v1h-1zM14 2h1v1h-1zM0 3h1v1h-1zM6 3h3v1h-3zM14 3h1v1h-1zM0 4h13v1h-13zM14 4h1v1h-1zM0 5h2v1h-2zM12 5h1v1h-1zM14 5h1v1h-1zM0 6h2v1h-2zM12 6h1v1h-1zM14 6h1v1h-1zM0 7h2v1h-2zM12 7h1v1h-1zM14 7h1v1h-1zM0 8h13v1h-13zM14 8h1v1h-1zM0 9h1v1h-1zM6 9h3v1h-3zM14 9h1v1h-1zM0 10h1v1h-1zM7 10h1v1h-1zM14 10h1v1h-1zM0 11h1v1h-1zM7 11h1v1h-1zM14 11h1v1h-1zM0 12h1v1h-1zM7 12h1v1h-1zM14 12h1v1h-1zM0 13h15v1h-15z"/></svg><div class="a" style="left:472px;top:54px;width:1px;height:17px;background:#9D9DA1;"></div><div class="a" style="left:473px;top:54px;width:1px;height:17px;background:#FFFFFF;"></div><svg class="px" style="left:480px;top:56px" width="15" height="14" shape-rendering="crispEdges"><path fill="#000000" d="M3 0h5v1h-5zM2 1h2v1h-2zM7 1h2v1h-2zM1 2h1v1h-1zM9 2h1v1h-1zM0 3h1v1h-1zM10 3h1v1h-1zM0 4h1v1h-1zM10 4h1v1h-1zM0 5h1v1h-1zM10 5h1v1h-1zM0 6h1v1h-1zM10 6h1v1h-1zM0 7h1v1h-1zM10 7h1v1h-1zM1 8h1v1h-1zM9 8h2v1h-2zM2 9h2v1h-2zM7 9h5v1h-5zM3 10h5v1h-5zM10 10h3v1h-3zM11 11h3v1h-3zM12 12h3v1h-3zM13 13h1v1h-1z"/><path fill="#000080" d="M4 3h3v1h-3zM4 4h3v1h-3zM2 5h7v1h-7zM4 6h3v1h-3zM4 7h3v1h-3z"/></svg><svg class="px" style="left:503px;top:56px" width="15" height="14" shape-rendering="crispEdges"><path fill="#000000" d="M3 0h5v1h-5zM2 1h2v1h-2zM7 1h2v1h-2zM1 2h1v1h-1zM9 2h1v1h-1zM0 3h1v1h-1zM10 3h1v1h-1zM0 4h1v1h-1zM10 4h1v1h-1zM0 5h1v1h-1zM10 5h1v1h-1zM0 6h1v1h-1zM10 6h1v1h-1zM0 7h1v1h-1zM10 7h1v1h-1zM1 8h1v1h-1zM9 8h2v1h-2zM2 9h2v1h-2zM7 9h5v1h-5zM3 10h5v1h-5zM10 10h3v1h-3zM11 11h3v1h-3zM12 12h3v1h-3zM13 13h1v1h-1z"/><path fill="#000080" d="M2 5h7v1h-7z"/></svg><div class="a" style="left:524px;top:54px;width:1px;height:17px;background:#9D9DA1;"></div><div class="a" style="left:525px;top:54px;width:1px;height:17px;background:#FFFFFF;"></div><svg class="px" style="left:532px;top:57px" width="15" height="12" shape-rendering="crispEdges"><path fill="#FFFFFF" d="M0 0h7v1h-7zM0 1h7v1h-7zM0 2h11v1h-11zM0 3h7v1h-7zM10 3h1v1h-1zM0 4h7v1h-7zM10 4h1v1h-1zM0 5h7v1h-7zM10 5h1v1h-1zM0 6h5v1h-5zM10 6h5v1h-5zM4 7h1v1h-1zM9 7h6v1h-6zM4 8h11v1h-11zM9 9h6v1h-6zM9 10h6v1h-6zM9 11h6v1h-6z"/></svg><svg class="px" style="left:531px;top:56px" width="15" height="12" shape-rendering="crispEdges"><path fill="#A29EAA" d="M0 0h7v1h-7zM0 1h7v1h-7zM0 2h11v1h-11zM0 3h7v1h-7zM10 3h1v1h-1zM0 4h7v1h-7zM10 4h1v1h-1zM0 5h7v1h-7zM10 5h1v1h-1zM0 6h5v1h-5zM10 6h5v1h-5zM4 7h1v1h-1zM9 7h6v1h-6zM4 8h11v1h-11zM9 9h6v1h-6zM9 10h6v1h-6zM9 11h6v1h-6z"/><path fill="#FFFFFF" d="M8 3h1v1h-1zM7 4h1v1h-1zM9 4h1v1h-1zM8 5h1v1h-1zM5 6h1v1h-1zM7 6h1v1h-1zM9 6h1v1h-1zM5 7h1v1h-1zM7 7h1v1h-1z"/></svg><svg class="px" style="left:555px;top:57px" width="15" height="12" shape-rendering="crispEdges"><path fill="#FFFFFF" d="M0 0h7v1h-7zM0 1h7v1h-7zM0 2h4v1h-4zM10 2h1v1h-1zM0 3h4v1h-4zM10 3h1v1h-1zM0 4h4v1h-4zM10 4h1v1h-1zM0 5h4v1h-4zM10 5h1v1h-1zM0 6h4v1h-4zM10 6h5v1h-5zM4 7h11v1h-11zM4 8h11v1h-11zM9 9h6v1h-6zM9 10h6v1h-6zM9 11h6v1h-6z"/></svg><svg class="px" style="left:554px;top:56px" width="15" height="12" shape-rendering="crispEdges"><path fill="#A29EAA" d="M0 0h7v1h-7zM0 1h7v1h-7zM0 2h4v1h-4zM10 2h1v1h-1zM0 3h4v1h-4zM10 3h1v1h-1zM0 4h4v1h-4zM10 4h1v1h-1zM0 5h4v1h-4zM10 5h1v1h-1zM0 6h4v1h-4zM10 6h5v1h-5zM4 7h11v1h-11zM4 8h11v1h-11zM9 9h6v1h-6zM9 10h6v1h-6zM9 11h6v1h-6z"/><path fill="#FFFFFF" d="M4 2h1v1h-1zM6 2h1v1h-1zM8 2h1v1h-1zM5 3h1v1h-1zM7 3h1v1h-1zM9 3h1v1h-1zM4 4h1v1h-1zM6 4h1v1h-1zM8 4h1v1h-1zM5 5h1v1h-1zM7 5h1v1h-1zM9 5h1v1h-1zM4 6h1v1h-1zM6 6h1v1h-1zM8 6h1v1h-1z"/></svg><svg class="px" style="left:579px;top:57px" width="13" height="11" shape-rendering="crispEdges"><path fill="#FFFFFF" d="M0 0h8v1h-8zM0 1h8v1h-8zM0 2h8v1h-8zM0 3h8v1h-8zM0 4h13v1h-13zM0 5h9v1h-9zM12 5h1v1h-1zM0 6h8v1h-8zM12 6h1v1h-1zM0 7h7v1h-7zM12 7h1v1h-1zM4 8h1v1h-1zM12 8h1v1h-1zM4 9h1v1h-1zM12 9h1v1h-1zM4 10h9v1h-9z"/></svg><svg class="px" style="left:578px;top:56px" width="13" height="11" shape-rendering="crispEdges"><path fill="#A29EAA" d="M0 0h8v1h-8zM0 1h8v1h-8zM0 2h8v1h-8zM0 3h8v1h-8zM0 4h13v1h-13zM0 5h9v1h-9zM12 5h1v1h-1zM0 6h8v1h-8zM12 6h1v1h-1zM0 7h7v1h-7zM12 7h1v1h-1zM4 8h1v1h-1zM12 8h1v1h-1zM4 9h1v1h-1zM12 9h1v1h-1zM4 10h9v1h-9z"/><path fill="#FFFFFF" d="M10 5h1v1h-1zM8 6h1v1h-1zM10 6h1v1h-1zM8 7h1v1h-1zM10 7h1v1h-1zM5 8h1v1h-1zM7 8h1v1h-1zM9 8h1v1h-1zM11 8h1v1h-1zM6 9h1v1h-1zM8 9h1v1h-1zM10 9h1v1h-1z"/></svg><svg class="px" style="left:602px;top:57px" width="13" height="10" shape-rendering="crispEdges"><path fill="#FFFFFF" d="M0 0h8v1h-8zM0 1h8v1h-8zM0 2h8v1h-8zM0 3h8v1h-8zM0 4h4v1h-4zM11 4h2v1h-2zM0 5h4v1h-4zM12 5h1v1h-1zM0 6h4v1h-4zM12 6h1v1h-1zM0 7h4v1h-4zM12 7h1v1h-1zM12 8h1v1h-1zM4 9h9v1h-9z"/></svg><svg class="px" style="left:601px;top:56px" width="13" height="10" shape-rendering="crispEdges"><path fill="#A29EAA" d="M0 0h8v1h-8zM0 1h8v1h-8zM0 2h8v1h-8zM0 3h8v1h-8zM0 4h4v1h-4zM11 4h2v1h-2zM0 5h4v1h-4zM12 5h1v1h-1zM0 6h4v1h-4zM12 6h1v1h-1zM0 7h4v1h-4zM12 7h1v1h-1zM12 8h1v1h-1zM4 9h9v1h-9z"/><path fill="#FFFFFF" d="M4 4h1v1h-1zM6 4h1v1h-1zM8 4h1v1h-1zM10 4h1v1h-1zM5 5h1v1h-1zM7 5h1v1h-1zM9 5h1v1h-1zM11 5h1v1h-1zM4 6h1v1h-1zM6 6h1v1h-1zM8 6h1v1h-1zM10 6h1v1h-1zM5 7h1v1h-1zM7 7h1v1h-1zM9 7h1v1h-1zM11 7h1v1h-1zM4 8h1v1h-1zM6 8h1v1h-1zM8 8h1v1h-1zM10 8h1v1h-1z"/></svg><div class="a" style="left:622px;top:54px;width:1px;height:17px;background:#9D9DA1;"></div><div class="a" style="left:623px;top:54px;width:1px;height:17px;background:#FFFFFF;"></div><svg class="px" style="left:631px;top:55px" width="11" height="12" shape-rendering="crispEdges"><path fill="#000000" d="M2 0h6v1h-6zM1 1h1v1h-1zM8 1h1v1h-1zM0 2h1v1h-1zM3 2h4v1h-4zM9 2h1v1h-1zM0 3h1v1h-1zM3 3h1v1h-1zM6 3h1v1h-1zM9 3h1v1h-1zM1 4h2v1h-2zM6 4h1v1h-1zM9 4h1v1h-1zM5 5h1v1h-1zM8 5h1v1h-1zM4 6h1v1h-1zM7 6h1v1h-1zM4 7h1v1h-1zM7 7h1v1h-1zM4 8h4v1h-4zM4 9h1v1h-1zM7 9h1v1h-1zM4 10h1v1h-1zM7 10h1v1h-1zM4 11h4v1h-4z"/><path fill="#FFFF00" d="M2 1h6v1h-6zM1 2h2v1h-2zM7 2h2v1h-2zM1 3h2v1h-2zM7 3h2v1h-2zM7 4h2v1h-2zM6 5h2v1h-2zM5 6h2v1h-2zM5 7h2v1h-2zM5 9h2v1h-2zM5 10h2v1h-2z"/></svg><div class="a" style="left:11px;top:76px;width:198px;height:20px;background:#E8DEE8;"></div><div class="a" style="left:11px;top:76px;width:198px;height:1px;background:#9D9DA1;"></div><div class="a" style="left:11px;top:76px;width:1px;height:20px;background:#9D9DA1;"></div><div class="a" style="left:12px;top:77px;width:196px;height:1px;background:#716F64;"></div><div class="a" style="left:12px;top:77px;width:1px;height:18px;background:#716F64;"></div><div class="a" style="left:11px;top:95px;width:198px;height:1px;background:#FFFFFF;"></div><div class="a" style="left:208px;top:76px;width:1px;height:20px;background:#FFFFFF;"></div><div class="a" style="left:12px;top:94px;width:196px;height:1px;background:#F1EFE2;"></div><div class="a" style="left:207px;top:77px;width:1px;height:18px;background:#F1EFE2;"></div><div class="a" style="left:15px;top:81px;font-size:12.2px;line-height:13px;color:#A4A08B;white-space:nowrap;letter-spacing:-0.75px">Lucida Sans Unicode</div><div class="a" style="left:192px;top:78px;width:16px;height:16px;background:#E8DEE8;"></div><div class="a" style="left:192px;top:78px;width:15px;height:1px;background:#F4F0F2;"></div><div class="a" style="left:192px;top:78px;width:1px;height:15px;background:#F4F0F2;"></div><div class="a" style="left:193px;top:79px;width:13px;height:1px;background:#FFFFFF;"></div><div class="a" style="left:193px;top:79px;width:1px;height:13px;background:#FFFFFF;"></div><div class="a" style="left:193px;top:92px;width:14px;height:1px;background:#9D9DA1;"></div><div class="a" style="left:206px;top:79px;width:1px;height:14px;background:#9D9DA1;"></div><div class="a" style="left:192px;top:93px;width:16px;height:1px;background:#716F64;"></div><div class="a" style="left:207px;top:78px;width:1px;height:16px;background:#716F64;"></div><svg class="px" style="left:196px;top:85px" width="7" height="4" shape-rendering="crispEdges"><path fill="#A29EAA" d="M0 0h7v1h-7zM1 1h5v1h-5zM2 2h3v1h-3zM3 3h1v1h-1z"/></svg><div class="a" style="left:211px;top:76px;width:74px;height:20px;background:#E8DEE8;"></div><div class="a" style="left:211px;top:76px;width:74px;height:1px;background:#9D9DA1;"></div><div class="a" style="left:211px;top:76px;width:1px;height:20px;background:#9D9DA1;"></div><div class="a" style="left:212px;top:77px;width:72px;height:1px;background:#716F64;"></div><div class="a" style="left:212px;top:77px;width:1px;height:18px;background:#716F64;"></div><div class="a" style="left:211px;top:95px;width:74px;height:1px;background:#FFFFFF;"></div><div class="a" style="left:284px;top:76px;width:1px;height:20px;background:#FFFFFF;"></div><div class="a" style="left:212px;top:94px;width:72px;height:1px;background:#F1EFE2;"></div><div class="a" style="left:283px;top:77px;width:1px;height:18px;background:#F1EFE2;"></div><div class="a" style="left:214px;top:81px;font-size:12.2px;line-height:13px;color:#A4A08B;white-space:nowrap;letter-spacing:-0.6px">12.00</div><div class="a" style="left:267px;top:78px;width:16px;height:16px;background:#E8DEE8;"></div><div class="a" style="left:267px;top:78px;width:15px;height:1px;background:#F4F0F2;"></div><div class="a" style="left:267px;top:78px;width:1px;height:15px;background:#F4F0F2;"></div><div class="a" style="left:268px;top:79px;width:13px;height:1px;background:#FFFFFF;"></div><div class="a" style="left:268px;top:79px;width:1px;height:13px;background:#FFFFFF;"></div><div class="a" style="left:268px;top:92px;width:14px;height:1px;background:#9D9DA1;"></div><div class="a" style="left:281px;top:79px;width:1px;height:14px;background:#9D9DA1;"></div><div class="a" style="left:267px;top:93px;width:16px;height:1px;background:#716F64;"></div><div class="a" style="left:282px;top:78px;width:1px;height:16px;background:#716F64;"></div><svg class="px" style="left:272px;top:85px" width="7" height="4" shape-rendering="crispEdges"><path fill="#A29EAA" d="M0 0h7v1h-7zM1 1h5v1h-5zM2 2h3v1h-3zM3 3h1v1h-1z"/></svg><div class="a" style="left:288px;top:78px;width:1px;height:17px;background:#9D9DA1;"></div><div class="a" style="left:289px;top:78px;width:1px;height:17px;background:#FFFFFF;"></div><svg class="px" style="left:300px;top:82px" width="9" height="10" shape-rendering="crispEdges"><path fill="#FFFFFF" d="M0 0h7v1h-7zM1 1h2v1h-2zM6 1h2v1h-2zM1 2h2v1h-2zM6 2h2v1h-2zM1 3h2v1h-2zM5 3h2v1h-2zM1 4h5v1h-5zM1 5h2v1h-2zM6 5h2v1h-2zM1 6h2v1h-2zM7 6h2v1h-2zM1 7h2v1h-2zM7 7h2v1h-2zM1 8h2v1h-2zM6 8h2v1h-2zM0 9h7v1h-7z"/></svg><svg class="px" style="left:299px;top:81px" width="9" height="10" shape-rendering="crispEdges"><path fill="#A29EAA" d="M0 0h7v1h-7zM1 1h2v1h-2zM6 1h2v1h-2zM1 2h2v1h-2zM6 2h2v1h-2zM1 3h2v1h-2zM5 3h2v1h-2zM1 4h5v1h-5zM1 5h2v1h-2zM6 5h2v1h-2zM1 6h2v1h-2zM7 6h2v1h-2zM1 7h2v1h-2zM7 7h2v1h-2zM1 8h2v1h-2zM6 8h2v1h-2zM0 9h7v1h-7z"/></svg><svg class="px" style="left:322px;top:82px" width="10" height="10" shape-rendering="crispEdges"><path fill="#FFFFFF" d="M4 0h6v1h-6zM5 1h3v1h-3zM5 2h2v1h-2zM4 3h3v1h-3zM4 4h2v1h-2zM3 5h3v1h-3zM3 6h2v1h-2zM2 7h3v1h-3zM2 8h2v1h-2zM0 9h6v1h-6z"/></svg><svg class="px" style="left:321px;top:81px" width="10" height="10" shape-rendering="crispEdges"><path fill="#A29EAA" d="M4 0h6v1h-6zM5 1h3v1h-3zM5 2h2v1h-2zM4 3h3v1h-3zM4 4h2v1h-2zM3 5h3v1h-3zM3 6h2v1h-2zM2 7h3v1h-3zM2 8h2v1h-2zM0 9h6v1h-6z"/></svg><div class="a" style="left:340px;top:78px;width:1px;height:17px;background:#9D9DA1;"></div><div class="a" style="left:341px;top:78px;width:1px;height:17px;background:#FFFFFF;"></div><div class="a" style="left:349px;top:81px;width:14px;height:13px;background:#FFFFFF;"></div><div class="a" style="left:348px;top:80px;width:14px;height:13px;background:#8E8C98;"></div><div class="a" style="left:4px;top:99px;width:24px;height:436px;background:#E8DEE8;"></div><div class="a" style="left:4px;top:99px;width:23px;height:1px;background:#FFFFFF;"></div><div class="a" style="left:5px;top:102px;width:21px;height:1px;background:#FFFFFF;"></div><div class="a" style="left:5px;top:104px;width:21px;height:1px;background:#9D9DA1;"></div><div class="a" style="left:5px;top:105px;width:21px;height:1px;background:#FFFFFF;"></div><div class="a" style="left:5px;top:107px;width:21px;height:1px;background:#9D9DA1;"></div><div class="a dither" style="left:5px;top:108px;width:21px;height:19px"></div><div class="a" style="left:4px;top:107px;width:22px;height:1px;background:#9D9DA1;"></div><div class="a" style="left:4px;top:107px;width:1px;height:21px;background:#9D9DA1;"></div><div class="a" style="left:5px;top:127px;width:22px;height:1px;background:#FFFFFF;"></div><div class="a" style="left:26px;top:107px;width:1px;height:21px;background:#FFFFFF;"></div><svg class="px" style="left:8px;top:111px" width="15" height="15" shape-rendering="crispEdges"><path fill="#000000" d="M0 0h1v1h-1zM0 1h2v1h-2zM1 2h3v1h-3zM1 3h5v1h-5zM1 4h7v1h-7zM2 5h8v1h-8zM2 6h9v1h-9zM2 7h7v1h-7zM3 8h7v1h-7zM3 9h4v1h-4zM8 9h3v1h-3zM3 10h3v1h-3zM9 10h3v1h-3zM4 11h1v1h-1zM10 11h3v1h-3zM11 12h3v1h-3zM12 13h3v1h-3zM13 14h1v1h-1z"/></svg><div class="a" style="left:5px;top:130px;width:21px;height:1px;background:#9D9DA1;"></div><div class="a" style="left:5px;top:131px;width:21px;height:1px;background:#FFFFFF;"></div><svg style="left:0;top:0" width="30" height="340"><path d="M9.5 139.5 L20.5 150.5" stroke="#000" stroke-width="0.9"/></svg><div class="a" style="left:8px;top:160px;width:14px;height:11px;background:transparent;border:1px solid #000"></div><div class="a" style="left:8px;top:181px;width:14px;height:11px;background:transparent;border:1px solid #000;border-radius:3px"></div><svg style="left:0;top:0" width="30" height="340"><path d="M12.5 200.5 L17.5 200.5 L21.5 204.5 L21.5 209.5 L17.5 213.5 L12.5 213.5 L8.5 209.5 L8.5 204.5 Z" fill="none" stroke="#000" stroke-width="1"/></svg><svg style="left:0;top:0" width="30" height="340"><path d="M10.5 224.5 L19.5 224.5 L21.5 232.5 L8.5 232.5 Z" fill="none" stroke="#000" stroke-width="1"/></svg><div class="a" style="left:5px;top:241px;width:21px;height:1px;background:#9D9DA1;"></div><div class="a" style="left:5px;top:242px;width:21px;height:1px;background:#FFFFFF;"></div><div class="a" style="left:7px;top:245px;width:16px;text-align:center;font-family:'Liberation Serif',serif;font-weight:bold;font-size:20px;line-height:20px">T</div><div class="a" style="left:7px;top:269px;font-family:'Liberation Serif',serif;font-weight:bold;font-size:15px;line-height:15px;white-space:nowrap;letter-spacing:-0.5px">S<span style="font-family:'Liberation Sans',sans-serif;font-weight:bold;font-size:12.5px;vertical-align:1px">#</span></div><div class="a" style="left:5px;top:289px;width:21px;height:1px;background:#9D9DA1;"></div><div class="a" style="left:5px;top:290px;width:21px;height:1px;background:#FFFFFF;"></div><svg class="px" style="left:8px;top:298px" width="14" height="11" shape-rendering="crispEdges"><path fill="#000000" d="M5 0h4v1h-4zM2 1h1v1h-1zM4 1h1v1h-1zM9 1h1v1h-1zM11 1h1v1h-1zM1 2h12v1h-12zM0 3h1v1h-1zM3 3h2v1h-2zM8 3h2v1h-2zM13 3h1v1h-1zM0 4h1v1h-1zM3 4h1v1h-1zM9 4h1v1h-1zM13 4h1v1h-1zM0 5h1v1h-1zM2 5h1v1h-1zM9 5h1v1h-1zM12 5h1v1h-1zM0 6h1v1h-1zM2 6h1v1h-1zM9 6h1v1h-1zM12 6h1v1h-1zM0 7h1v1h-1zM3 7h1v1h-1zM8 7h1v1h-1zM12 7h1v1h-1zM0 8h1v1h-1zM3 8h2v1h-2zM8 8h2v1h-2zM12 8h1v1h-1zM1 9h11v1h-11z"/><path fill="#FFFFFF" d="M5 1h4v1h-4zM1 3h2v1h-2zM10 3h3v1h-3zM1 4h2v1h-2zM5 4h3v1h-3zM10 4h3v1h-3zM1 5h1v1h-1zM4 5h1v1h-1zM10 5h2v1h-2zM1 6h1v1h-1zM10 6h2v1h-2zM1 7h2v1h-2zM9 7h3v1h-3zM1 8h2v1h-2zM10 8h2v1h-2z"/><path fill="#C0C0C0" d="M5 3h3v1h-3zM4 4h1v1h-1zM8 4h1v1h-1zM3 5h1v1h-1zM7 5h2v1h-2zM3 6h1v1h-1zM7 6h2v1h-2zM4 7h4v1h-4zM5 8h3v1h-3z"/><path fill="#808080" d="M5 5h2v1h-2zM4 6h3v1h-3z"/></svg><div class="a" style="left:4px;top:323px;width:23px;height:1px;background:#9D9DA1;"></div><div class="a" style="left:4px;top:324px;width:23px;height:1px;background:#FFFFFF;"></div><div class="a" style="left:27px;top:98px;width:725px;height:438px;background:#9D9DA1;"></div><div class="a" style="left:28px;top:99px;width:723px;height:437px;background:#FFFFFF;"></div><div class="a" style="left:28px;top:99px;width:722px;height:435px;background:#000000;"></div><div class="a" style="left:29px;top:100px;width:721px;height:435px;background:#E8DEE8;"></div><div class="a" style="left:29px;top:100px;width:704px;height:417px;background:#7B9DC8;"></div><div class="a" style="left:733px;top:100px;width:17px;height:7px;background:#E8DEE8;"></div><div class="a" style="left:733px;top:100px;width:16px;height:1px;background:#FFFFFF;"></div><div class="a" style="left:733px;top:100px;width:1px;height:6px;background:#FFFFFF;"></div><div class="a" style="left:733px;top:106px;width:16px;height:1px;background:#000;"></div><div class="a" style="left:749px;top:99px;width:1px;height:8px;background:#000;"></div><div class="a dither" style="left:733px;top:123px;width:17px;height:377px"></div><div class="a" style="left:733px;top:107px;width:17px;height:17px;background:#E8DEE8;"></div><div class="a" style="left:733px;top:107px;width:16px;height:1px;background:#F4F0F2;"></div><div class="a" style="left:733px;top:107px;width:1px;height:16px;background:#F4F0F2;"></div><div class="a" style="left:734px;top:108px;width:14px;height:1px;background:#FFFFFF;"></div><div class="a" style="left:734px;top:108px;width:1px;height:14px;background:#FFFFFF;"></div><div class="a" style="left:734px;top:122px;width:15px;height:1px;background:#9D9DA1;"></div><div class="a" style="left:748px;top:108px;width:1px;height:15px;background:#9D9DA1;"></div><div class="a" style="left:733px;top:123px;width:17px;height:1px;background:#716F64;"></div><div class="a" style="left:749px;top:107px;width:1px;height:17px;background:#716F64;"></div><svg class="px" style="left:738px;top:113px" width="7" height="4" shape-rendering="crispEdges"><path fill="#000000" d="M3 0h1v1h-1zM2 1h3v1h-3zM1 2h5v1h-5zM0 3h7v1h-7z"/></svg><div class="a" style="left:733px;top:311px;width:17px;height:16px;background:#E8DEE8;"></div><div class="a" style="left:733px;top:311px;width:16px;height:1px;background:#F4F0F2;"></div><div class="a" style="left:733px;top:311px;width:1px;height:15px;background:#F4F0F2;"></div><div class="a" style="left:734px;top:312px;width:14px;height:1px;background:#FFFFFF;"></div><div class="a" style="left:734px;top:312px;width:1px;height:13px;background:#FFFFFF;"></div><div class="a" style="left:734px;top:325px;width:15px;height:1px;background:#9D9DA1;"></div><div class="a" style="left:748px;top:312px;width:1px;height:14px;background:#9D9DA1;"></div><div class="a" style="left:733px;top:326px;width:17px;height:1px;background:#716F64;"></div><div class="a" style="left:749px;top:311px;width:1px;height:16px;background:#716F64;"></div><div class="a" style="left:733px;top:500px;width:17px;height:17px;background:#E8DEE8;"></div><div class="a" style="left:733px;top:500px;width:16px;height:1px;background:#F4F0F2;"></div><div class="a" style="left:733px;top:500px;width:1px;height:16px;background:#F4F0F2;"></div><div class="a" style="left:734px;top:501px;width:14px;height:1px;background:#FFFFFF;"></div><div class="a" style="left:734px;top:501px;width:1px;height:14px;background:#FFFFFF;"></div><div class="a" style="left:734px;top:515px;width:15px;height:1px;background:#9D9DA1;"></div><div class="a" style="left:748px;top:501px;width:1px;height:15px;background:#9D9DA1;"></div><div class="a" style="left:733px;top:516px;width:17px;height:1px;background:#716F64;"></div><div class="a" style="left:749px;top:500px;width:1px;height:17px;background:#716F64;"></div><svg class="px" style="left:738px;top:506px" width="7" height="4" shape-rendering="crispEdges"><path fill="#000000" d="M0 0h7v1h-7zM1 1h5v1h-5zM2 2h3v1h-3zM3 3h1v1h-1z"/></svg><div class="a dither" style="left:45px;top:517px;width:671px;height:17px"></div><div class="a" style="left:29px;top:517px;width:17px;height:17px;background:#E8DEE8;"></div><div class="a" style="left:29px;top:517px;width:16px;height:1px;background:#F4F0F2;"></div><div class="a" style="left:29px;top:517px;width:1px;height:16px;background:#F4F0F2;"></div><div class="a" style="left:30px;top:518px;width:14px;height:1px;background:#FFFFFF;"></div><div class="a" style="left:30px;top:518px;width:1px;height:14px;background:#FFFFFF;"></div><div class="a" style="left:30px;top:532px;width:15px;height:1px;background:#9D9DA1;"></div><div class="a" style="left:44px;top:518px;width:1px;height:15px;background:#9D9DA1;"></div><div class="a" style="left:29px;top:533px;width:17px;height:1px;background:#716F64;"></div><div class="a" style="left:45px;top:517px;width:1px;height:17px;background:#716F64;"></div><svg class="px" style="left:35px;top:521px" width="4" height="7" shape-rendering="crispEdges"><path fill="#000000" d="M3 0h1v1h-1zM2 1h2v1h-2zM1 2h3v1h-3zM0 3h4v1h-4zM1 4h3v1h-3zM2 5h2v1h-2zM3 6h1v1h-1z"/></svg><div class="a" style="left:379px;top:517px;width:50px;height:17px;background:#E8DEE8;"></div><div class="a" style="left:379px;top:517px;width:49px;height:1px;background:#F4F0F2;"></div><div class="a" style="left:379px;top:517px;width:1px;height:16px;background:#F4F0F2;"></div><div class="a" style="left:380px;top:518px;width:47px;height:1px;background:#FFFFFF;"></div><div class="a" style="left:380px;top:518px;width:1px;height:14px;background:#FFFFFF;"></div><div class="a" style="left:380px;top:532px;width:48px;height:1px;background:#9D9DA1;"></div><div class="a" style="left:427px;top:518px;width:1px;height:15px;background:#9D9DA1;"></div><div class="a" style="left:379px;top:533px;width:50px;height:1px;background:#716F64;"></div><div class="a" style="left:428px;top:517px;width:1px;height:17px;background:#716F64;"></div><div class="a" style="left:716px;top:517px;width:17px;height:17px;background:#E8DEE8;"></div><div class="a" style="left:716px;top:517px;width:16px;height:1px;background:#F4F0F2;"></div><div class="a" style="left:716px;top:517px;width:1px;height:16px;background:#F4F0F2;"></div><div class="a" style="left:717px;top:518px;width:14px;height:1px;background:#FFFFFF;"></div><div class="a" style="left:717px;top:518px;width:1px;height:14px;background:#FFFFFF;"></div><div class="a" style="left:717px;top:532px;width:15px;height:1px;background:#9D9DA1;"></div><div class="a" style="left:731px;top:518px;width:1px;height:15px;background:#9D9DA1;"></div><div class="a" style="left:716px;top:533px;width:17px;height:1px;background:#716F64;"></div><div class="a" style="left:732px;top:517px;width:1px;height:17px;background:#716F64;"></div><svg class="px" style="left:722px;top:521px" width="4" height="7" shape-rendering="crispEdges"><path fill="#000000" d="M0 0h1v1h-1zM0 1h2v1h-2zM0 2h3v1h-3zM0 3h4v1h-4zM0 4h3v1h-3zM0 5h2v1h-2zM0 6h1v1h-1z"/></svg><div class="a" style="left:733px;top:517px;width:17px;height:17px;background:#E8DEE8;"></div><div class="a" style="left:4px;top:536px;width:748px;height:18px;background:#E8DEE8;"></div><div class="a" style="left:4px;top:534px;width:25px;height:1px;background:#9D9DA1;"></div><div class="a" style="left:4px;top:535px;width:748px;height:1px;background:#FFFFFF;"></div><div class="a" style="left:4px;top:538px;width:61px;height:16px;background:#E8DEE8;"></div><div class="a" style="left:4px;top:538px;width:61px;height:1px;background:#9D9DA1;"></div><div class="a" style="left:4px;top:538px;width:1px;height:16px;background:#9D9DA1;"></div><div class="a" style="left:4px;top:553px;width:61px;height:1px;background:#FFFFFF;"></div><div class="a" style="left:64px;top:538px;width:1px;height:16px;background:#FFFFFF;"></div><div class="a" style="left:6px;top:540px;font-size:11px;line-height:13px;white-space:nowrap">301, 248</div><div class="a" style="left:68px;top:540px;font-size:11px;line-height:13px;white-space:nowrap">Ready</div><div class="a" style="left:644px;top:538px;width:26px;height:16px;background:#E8DEE8;"></div><div class="a" style="left:644px;top:538px;width:26px;height:1px;background:#9D9DA1;"></div><div class="a" style="left:644px;top:538px;width:1px;height:16px;background:#9D9DA1;"></div><div class="a" style="left:644px;top:553px;width:26px;height:1px;background:#FFFFFF;"></div><div class="a" style="left:669px;top:538px;width:1px;height:16px;background:#FFFFFF;"></div><div class="a" style="left:672px;top:538px;width:28px;height:16px;background:#E8DEE8;"></div><div class="a" style="left:672px;top:538px;width:28px;height:1px;background:#9D9DA1;"></div><div class="a" style="left:672px;top:538px;width:1px;height:16px;background:#9D9DA1;"></div><div class="a" style="left:672px;top:553px;width:28px;height:1px;background:#FFFFFF;"></div><div class="a" style="left:699px;top:538px;width:1px;height:16px;background:#FFFFFF;"></div><div class="a" style="left:673px;top:540px;font-size:11px;line-height:13px;white-space:nowrap;letter-spacing:-0.6px">NUM</div><div class="a" style="left:702px;top:538px;width:31px;height:16px;background:#E8DEE8;"></div><div class="a" style="left:702px;top:538px;width:31px;height:1px;background:#9D9DA1;"></div><div class="a" style="left:702px;top:538px;width:1px;height:16px;background:#9D9DA1;"></div><div class="a" style="left:702px;top:553px;width:31px;height:1px;background:#FFFFFF;"></div><div class="a" style="left:732px;top:538px;width:1px;height:16px;background:#FFFFFF;"></div><svg style="left:736px;top:540px" width="16" height="14" shape-rendering="crispEdges"><path d="M13 2L3 12M13 6L7 12M13 10L11 12" stroke="#FFFFFF" stroke-width="1"/><path d="M14 2L4 12M14 6L8 12M14 10L12 12" stroke="#A7A3AE" stroke-width="1.3"/></svg><div class="a" style="left:54px;top:125px;width:528px;height:203px;background:#FFFFFF;border:1px solid #000"></div><div class="a" style="left:66px;top:132px;width:505px;height:186px;background:transparent;border:1px solid #8C8CF4"></div><svg style="left:0;top:0" width="756" height="558"><defs><clipPath id="sc"><rect x="392" y="133" width="177" height="182"/></clipPath></defs><g clip-path="url(#sc)"><path d="M468.0 208.0L468.0 184.0M468.0 200.8L462.5 196.2M468.0 200.8L473.5 196.2M468.0 194.2L463.9 190.7M468.0 194.2L472.1 190.7M468.0 187.6L465.2 185.3M468.0 187.6L470.8 185.3M468.0 208.0L485.0 191.0M473.1 202.9L472.5 195.7M473.1 202.9L480.3 203.5M477.8 198.2L477.3 192.9M477.8 198.2L483.1 198.7M482.4 193.6L482.1 190.0M482.4 193.6L486.0 193.9M468.0 208.0L492.0 208.0M475.2 208.0L479.8 202.5M475.2 208.0L479.8 213.5M481.8 208.0L485.3 203.9M481.8 208.0L485.3 212.1M488.4 208.0L490.7 205.2M488.4 208.0L490.7 210.8M468.0 208.0L485.0 225.0M473.1 213.1L480.3 212.5M473.1 213.1L472.5 220.3M477.8 217.8L483.1 217.3M477.8 217.8L477.3 223.1M482.4 222.4L486.0 222.1M482.4 222.4L482.1 226.0M468.0 208.0L468.0 232.0M468.0 215.2L473.5 219.8M468.0 215.2L462.5 219.8M468.0 221.8L472.1 225.3M468.0 221.8L463.9 225.3M468.0 228.4L470.8 230.7M468.0 228.4L465.2 230.7M468.0 208.0L451.0 225.0M462.9 213.1L463.5 220.3M462.9 213.1L455.7 212.5M458.2 217.8L458.7 223.1M458.2 217.8L452.9 217.3M453.6 222.4L453.9 226.0M453.6 222.4L450.0 222.1M468.0 208.0L444.0 208.0M460.8 208.0L456.2 213.5M460.8 208.0L456.2 202.5M454.2 208.0L450.7 212.1M454.2 208.0L450.7 203.9M447.6 208.0L445.3 210.8M447.6 208.0L445.3 205.2M468.0 208.0L451.0 191.0M462.9 202.9L455.7 203.5M462.9 202.9L463.5 195.7M458.2 198.2L452.9 198.7M458.2 198.2L458.7 192.9M453.6 193.6L450.0 193.9M453.6 193.6L453.9 190.0" stroke="#DAE6F7" stroke-width="1.3" stroke-linecap="round" fill="none"/><path d="M468.0 208.0L468.0 184.0M468.0 200.8L462.5 196.2M468.0 200.8L473.5 196.2M468.0 194.2L463.9 190.7M468.0 194.2L472.1 190.7M468.0 187.6L465.2 185.3M468.0 187.6L470.8 185.3M468.0 208.0L485.0 191.0M473.1 202.9L472.5 195.7M473.1 202.9L480.3 203.5M477.8 198.2L477.3 192.9M477.8 198.2L483.1 198.7M482.4 193.6L482.1 190.0M482.4 193.6L486.0 193.9M468.0 208.0L492.0 208.0M475.2 208.0L479.8 202.5M475.2 208.0L479.8 213.5M481.8 208.0L485.3 203.9M481.8 208.0L485.3 212.1M488.4 208.0L490.7 205.2M488.4 208.0L490.7 210.8M468.0 208.0L485.0 225.0M473.1 213.1L480.3 212.5M473.1 213.1L472.5 220.3M477.8 217.8L483.1 217.3M477.8 217.8L477.3 223.1M482.4 222.4L486.0 222.1M482.4 222.4L482.1 226.0M468.0 208.0L468.0 232.0M468.0 215.2L473.5 219.8M468.0 215.2L462.5 219.8M468.0 221.8L472.1 225.3M468.0 221.8L463.9 225.3M468.0 228.4L470.8 230.7M468.0 228.4L465.2 230.7M468.0 208.0L451.0 225.0M462.9 213.1L463.5 220.3M462.9 213.1L455.7 212.5M458.2 217.8L458.7 223.1M458.2 217.8L452.9 217.3M453.6 222.4L453.9 226.0M453.6 222.4L450.0 222.1M468.0 208.0L444.0 208.0M460.8 208.0L456.2 213.5M460.8 208.0L456.2 202.5M454.2 208.0L450.7 212.1M454.2 208.0L450.7 203.9M447.6 208.0L445.3 210.8M447.6 208.0L445.3 205.2M468.0 208.0L451.0 191.0M462.9 202.9L455.7 203.5M462.9 202.9L463.5 195.7M458.2 198.2L452.9 198.7M458.2 198.2L458.7 192.9M453.6 193.6L450.0 193.9M453.6 193.6L453.9 190.0" stroke="#FFFFFF" stroke-width="0.01" stroke-linecap="round" fill="none"/><path d="M530.0 190.0L540.9 149.4M533.3 177.8L526.0 167.5M533.3 177.8L544.7 172.5M539.2 155.5L535.6 150.4M539.2 155.5L544.9 152.9M530.0 190.0L570.6 179.1M542.2 186.7L547.5 175.3M542.2 186.7L552.5 194.0M564.5 180.8L567.1 175.1M564.5 180.8L569.6 184.4M530.0 190.0L559.7 219.7M538.9 198.9L551.5 197.8M538.9 198.9L537.8 211.5M555.2 215.2L561.5 214.7M555.2 215.2L554.7 221.5M530.0 190.0L519.1 230.6M526.7 202.2L534.0 212.5M526.7 202.2L515.3 207.5M520.8 224.5L524.4 229.6M520.8 224.5L515.1 227.1M530.0 190.0L489.4 200.9M517.8 193.3L512.5 204.7M517.8 193.3L507.5 186.0M495.5 199.2L492.9 204.9M495.5 199.2L490.4 195.6M530.0 190.0L500.3 160.3M521.1 181.1L508.5 182.2M521.1 181.1L522.2 168.5M504.8 164.8L498.5 165.3M504.8 164.8L505.3 158.5" stroke="#E6EEF9" stroke-width="4" stroke-linecap="round" fill="none"/><path d="M530.0 190.0L540.9 149.4M533.3 177.8L526.0 167.5M533.3 177.8L544.7 172.5M539.2 155.5L535.6 150.4M539.2 155.5L544.9 152.9M530.0 190.0L570.6 179.1M542.2 186.7L547.5 175.3M542.2 186.7L552.5 194.0M564.5 180.8L567.1 175.1M564.5 180.8L569.6 184.4M530.0 190.0L559.7 219.7M538.9 198.9L551.5 197.8M538.9 198.9L537.8 211.5M555.2 215.2L561.5 214.7M555.2 215.2L554.7 221.5M530.0 190.0L519.1 230.6M526.7 202.2L534.0 212.5M526.7 202.2L515.3 207.5M520.8 224.5L524.4 229.6M520.8 224.5L515.1 227.1M530.0 190.0L489.4 200.9M517.8 193.3L512.5 204.7M517.8 193.3L507.5 186.0M495.5 199.2L492.9 204.9M495.5 199.2L490.4 195.6M530.0 190.0L500.3 160.3M521.1 181.1L508.5 182.2M521.1 181.1L522.2 168.5M504.8 164.8L498.5 165.3M504.8 164.8L505.3 158.5" stroke="#FFFFFF" stroke-width="2" stroke-linecap="round" fill="none"/><path d="M412.0 170.0L416.5 144.4M413.4 162.3L408.3 156.3M413.4 162.3L420.1 158.4M414.6 155.3L410.8 150.8M414.6 155.3L419.7 152.4M415.8 148.2L413.3 145.2M415.8 148.2L419.2 146.3M412.0 170.0L436.4 161.1M419.3 167.3L422.0 160.0M419.3 167.3L426.1 171.2M426.0 164.9L428.0 159.4M426.0 164.9L431.1 167.8M432.8 162.4L434.1 158.8M432.8 162.4L436.1 164.4M412.0 170.0L431.9 186.7M418.0 175.0L425.7 173.7M418.0 175.0L418.0 182.8M423.5 179.6L429.2 178.6M423.5 179.6L423.5 185.5M428.9 184.2L432.8 183.5M428.9 184.2L428.9 188.1M412.0 170.0L407.5 195.6M410.6 177.7L415.7 183.7M410.6 177.7L403.9 181.6M409.4 184.7L413.2 189.2M409.4 184.7L404.3 187.6M408.2 191.8L410.7 194.8M408.2 191.8L404.8 193.7M412.0 170.0L387.6 178.9M404.7 172.7L402.0 180.0M404.7 172.7L397.9 168.8M398.0 175.1L396.0 180.6M398.0 175.1L392.9 172.2M391.2 177.6L389.9 181.2M391.2 177.6L387.9 175.6M412.0 170.0L392.1 153.3M406.0 165.0L398.3 166.3M406.0 165.0L406.0 157.2M400.5 160.4L394.8 161.4M400.5 160.4L400.5 154.5M395.1 155.8L391.2 156.5M395.1 155.8L395.1 151.9" stroke="#E8EFFA" stroke-width="4" stroke-linecap="round" fill="none"/><path d="M412.0 170.0L416.5 144.4M413.4 162.3L408.3 156.3M413.4 162.3L420.1 158.4M414.6 155.3L410.8 150.8M414.6 155.3L419.7 152.4M415.8 148.2L413.3 145.2M415.8 148.2L419.2 146.3M412.0 170.0L436.4 161.1M419.3 167.3L422.0 160.0M419.3 167.3L426.1 171.2M426.0 164.9L428.0 159.4M426.0 164.9L431.1 167.8M432.8 162.4L434.1 158.8M432.8 162.4L436.1 164.4M412.0 170.0L431.9 186.7M418.0 175.0L425.7 173.7M418.0 175.0L418.0 182.8M423.5 179.6L429.2 178.6M423.5 179.6L423.5 185.5M428.9 184.2L432.8 183.5M428.9 184.2L428.9 188.1M412.0 170.0L407.5 195.6M410.6 177.7L415.7 183.7M410.6 177.7L403.9 181.6M409.4 184.7L413.2 189.2M409.4 184.7L404.3 187.6M408.2 191.8L410.7 194.8M408.2 191.8L404.8 193.7M412.0 170.0L387.6 178.9M404.7 172.7L402.0 180.0M404.7 172.7L397.9 168.8M398.0 175.1L396.0 180.6M398.0 175.1L392.9 172.2M391.2 177.6L389.9 181.2M391.2 177.6L387.9 175.6M412.0 170.0L392.1 153.3M406.0 165.0L398.3 166.3M406.0 165.0L406.0 157.2M400.5 160.4L394.8 161.4M400.5 160.4L400.5 154.5M395.1 155.8L391.2 156.5M395.1 155.8L395.1 151.9" stroke="#FFFFFF" stroke-width="2" stroke-linecap="round" fill="none"/><path d="M422.0 252.0L422.0 222.0M422.0 243.0L415.1 237.2M422.0 243.0L428.9 237.2M422.0 234.8L416.8 230.4M422.0 234.8L427.2 230.4M422.0 226.5L418.6 223.6M422.0 226.5L425.4 223.6M422.0 252.0L448.0 237.0M429.8 247.5L431.4 238.6M429.8 247.5L438.3 250.6M436.9 243.4L438.1 236.7M436.9 243.4L443.3 245.7M444.1 239.2L444.9 234.8M444.1 239.2L448.3 240.8M422.0 252.0L448.0 267.0M429.8 256.5L438.3 253.4M429.8 256.5L431.4 265.4M436.9 260.6L443.3 258.3M436.9 260.6L438.1 267.3M444.1 264.8L448.3 263.2M444.1 264.8L444.9 269.2M422.0 252.0L422.0 282.0M422.0 261.0L428.9 266.8M422.0 261.0L415.1 266.8M422.0 269.2L427.2 273.6M422.0 269.2L416.8 273.6M422.0 277.5L425.4 280.4M422.0 277.5L418.6 280.4M422.0 252.0L396.0 267.0M414.2 256.5L412.6 265.4M414.2 256.5L405.7 253.4M407.1 260.6L405.9 267.3M407.1 260.6L400.7 258.3M399.9 264.8L399.1 269.2M399.9 264.8L395.7 263.2M422.0 252.0L396.0 237.0M414.2 247.5L405.7 250.6M414.2 247.5L412.6 238.6M407.1 243.4L400.7 245.7M407.1 243.4L405.9 236.7M399.9 239.2L395.7 240.8M399.9 239.2L399.1 234.8" stroke="#E8EFFA" stroke-width="4" stroke-linecap="round" fill="none"/><path d="M422.0 252.0L422.0 222.0M422.0 243.0L415.1 237.2M422.0 243.0L428.9 237.2M422.0 234.8L416.8 230.4M422.0 234.8L427.2 230.4M422.0 226.5L418.6 223.6M422.0 226.5L425.4 223.6M422.0 252.0L448.0 237.0M429.8 247.5L431.4 238.6M429.8 247.5L438.3 250.6M436.9 243.4L438.1 236.7M436.9 243.4L443.3 245.7M444.1 239.2L444.9 234.8M444.1 239.2L448.3 240.8M422.0 252.0L448.0 267.0M429.8 256.5L438.3 253.4M429.8 256.5L431.4 265.4M436.9 260.6L443.3 258.3M436.9 260.6L438.1 267.3M444.1 264.8L448.3 263.2M444.1 264.8L444.9 269.2M422.0 252.0L422.0 282.0M422.0 261.0L428.9 266.8M422.0 261.0L415.1 266.8M422.0 269.2L427.2 273.6M422.0 269.2L416.8 273.6M422.0 277.5L425.4 280.4M422.0 277.5L418.6 280.4M422.0 252.0L396.0 267.0M414.2 256.5L412.6 265.4M414.2 256.5L405.7 253.4M407.1 260.6L405.9 267.3M407.1 260.6L400.7 258.3M399.9 264.8L399.1 269.2M399.9 264.8L395.7 263.2M422.0 252.0L396.0 237.0M414.2 247.5L405.7 250.6M414.2 247.5L412.6 238.6M407.1 243.4L400.7 245.7M407.1 243.4L405.9 236.7M399.9 239.2L395.7 240.8M399.9 239.2L399.1 234.8" stroke="#FFFFFF" stroke-width="2" stroke-linecap="round" fill="none"/><path d="M534.0 282.0L544.3 253.8M537.1 273.5L532.6 265.7M537.1 273.5L545.5 270.5M539.9 265.8L536.5 259.9M539.9 265.8L546.2 263.5M542.7 258.0L540.5 254.1M542.7 258.0L547.0 256.5M534.0 282.0L563.5 276.8M542.9 280.4L547.4 272.6M542.9 280.4L549.8 286.2M551.0 279.0L554.4 273.2M551.0 279.0L556.2 283.3M559.1 277.6L561.4 273.7M559.1 277.6L562.6 280.5M534.0 282.0L553.3 305.0M539.8 288.9L548.8 288.9M539.8 288.9L538.2 297.8M545.1 295.2L551.8 295.2M545.1 295.2L543.9 301.9M550.4 301.5L554.9 301.5M550.4 301.5L549.6 306.0M534.0 282.0L523.7 310.2M530.9 290.5L535.4 298.3M530.9 290.5L522.5 293.5M528.1 298.2L531.5 304.1M528.1 298.2L521.8 300.5M525.3 306.0L527.5 309.9M525.3 306.0L521.0 307.5M534.0 282.0L504.5 287.2M525.1 283.6L520.6 291.4M525.1 283.6L518.2 277.8M517.0 285.0L513.6 290.8M517.0 285.0L511.8 280.7M508.9 286.4L506.6 290.3M508.9 286.4L505.4 283.5M534.0 282.0L514.7 259.0M528.2 275.1L519.2 275.1M528.2 275.1L529.8 266.2M522.9 268.8L516.2 268.8M522.9 268.8L524.1 262.1M517.6 262.5L513.1 262.5M517.6 262.5L518.4 258.0" stroke="#E8EFFA" stroke-width="4" stroke-linecap="round" fill="none"/><path d="M534.0 282.0L544.3 253.8M537.1 273.5L532.6 265.7M537.1 273.5L545.5 270.5M539.9 265.8L536.5 259.9M539.9 265.8L546.2 263.5M542.7 258.0L540.5 254.1M542.7 258.0L547.0 256.5M534.0 282.0L563.5 276.8M542.9 280.4L547.4 272.6M542.9 280.4L549.8 286.2M551.0 279.0L554.4 273.2M551.0 279.0L556.2 283.3M559.1 277.6L561.4 273.7M559.1 277.6L562.6 280.5M534.0 282.0L553.3 305.0M539.8 288.9L548.8 288.9M539.8 288.9L538.2 297.8M545.1 295.2L551.8 295.2M545.1 295.2L543.9 301.9M550.4 301.5L554.9 301.5M550.4 301.5L549.6 306.0M534.0 282.0L523.7 310.2M530.9 290.5L535.4 298.3M530.9 290.5L522.5 293.5M528.1 298.2L531.5 304.1M528.1 298.2L521.8 300.5M525.3 306.0L527.5 309.9M525.3 306.0L521.0 307.5M534.0 282.0L504.5 287.2M525.1 283.6L520.6 291.4M525.1 283.6L518.2 277.8M517.0 285.0L513.6 290.8M517.0 285.0L511.8 280.7M508.9 286.4L506.6 290.3M508.9 286.4L505.4 283.5M534.0 282.0L514.7 259.0M528.2 275.1L519.2 275.1M528.2 275.1L529.8 266.2M522.9 268.8L516.2 268.8M522.9 268.8L524.1 262.1M517.6 262.5L513.1 262.5M517.6 262.5L518.4 258.0" stroke="#FFFFFF" stroke-width="2" stroke-linecap="round" fill="none"/><path d="M470.0 295.0L470.0 275.0M470.0 289.0L465.4 285.1M470.0 289.0L474.6 285.1M470.0 278.0L467.7 276.1M470.0 278.0L472.3 276.1M470.0 295.0L487.3 285.0M475.2 292.0L476.2 286.1M475.2 292.0L480.8 294.1M484.7 286.5L485.2 283.5M484.7 286.5L487.5 287.5M470.0 295.0L487.3 305.0M475.2 298.0L480.8 295.9M475.2 298.0L476.2 303.9M484.7 303.5L487.5 302.5M484.7 303.5L485.2 306.5M470.0 295.0L470.0 315.0M470.0 301.0L474.6 304.9M470.0 301.0L465.4 304.9M470.0 312.0L472.3 313.9M470.0 312.0L467.7 313.9M470.0 295.0L452.7 305.0M464.8 298.0L463.8 303.9M464.8 298.0L459.2 295.9M455.3 303.5L454.8 306.5M455.3 303.5L452.5 302.5M470.0 295.0L452.7 285.0M464.8 292.0L459.2 294.1M464.8 292.0L463.8 286.1M455.3 286.5L452.5 287.5M455.3 286.5L454.8 283.5" stroke="#EAF0FA" stroke-width="3" stroke-linecap="round" fill="none"/><path d="M470.0 295.0L470.0 275.0M470.0 289.0L465.4 285.1M470.0 289.0L474.6 285.1M470.0 278.0L467.7 276.1M470.0 278.0L472.3 276.1M470.0 295.0L487.3 285.0M475.2 292.0L476.2 286.1M475.2 292.0L480.8 294.1M484.7 286.5L485.2 283.5M484.7 286.5L487.5 287.5M470.0 295.0L487.3 305.0M475.2 298.0L480.8 295.9M475.2 298.0L476.2 303.9M484.7 303.5L487.5 302.5M484.7 303.5L485.2 306.5M470.0 295.0L470.0 315.0M470.0 301.0L474.6 304.9M470.0 301.0L465.4 304.9M470.0 312.0L472.3 313.9M470.0 312.0L467.7 313.9M470.0 295.0L452.7 305.0M464.8 298.0L463.8 303.9M464.8 298.0L459.2 295.9M455.3 303.5L454.8 306.5M455.3 303.5L452.5 302.5M470.0 295.0L452.7 285.0M464.8 292.0L459.2 294.1M464.8 292.0L463.8 286.1M455.3 286.5L452.5 287.5M455.3 286.5L454.8 283.5" stroke="#FFFFFF" stroke-width="1" stroke-linecap="round" fill="none"/></g></svg><div class="a" style="left:70px;top:144px;width:302px;height:166px;background:#5782C8;-webkit-mask-image:linear-gradient(to right,transparent 0px,rgba(0,0,0,0.5) 3px,#000 8px,#000 298px,transparent 302px),linear-gradient(to bottom,transparent 0px,rgba(0,0,0,0.5) 2px,#000 5px,#000 159px,rgba(0,0,0,0.5) 162px,transparent 166px);-webkit-mask-composite:source-in;mask-composite:intersect"></div><svg style="left:0;top:0" width="756" height="558"><defs><clipPath id="bc"><rect x="74" y="147" width="295" height="158"/></clipPath></defs><g clip-path="url(#bc)"><path d="M98.0 175.0L98.0 113.0M98.0 156.4L83.8 144.4M98.0 156.4L112.2 144.4M98.0 145.0L86.1 135.1M98.0 145.0L109.9 135.1M98.0 133.7L88.5 125.7M98.0 133.7L107.5 125.7M98.0 122.3L90.9 116.3M98.0 122.3L105.1 116.3M98.0 175.0L141.8 131.2M111.2 161.8L109.5 143.3M111.2 161.8L129.7 163.5M119.2 153.8L117.8 138.4M119.2 153.8L134.6 155.2M127.2 145.8L126.1 133.4M127.2 145.8L139.6 146.9M135.3 137.7L134.5 128.5M135.3 137.7L144.5 138.5M98.0 175.0L160.0 175.0M116.6 175.0L128.6 160.8M116.6 175.0L128.6 189.2M128.0 175.0L137.9 163.1M128.0 175.0L137.9 186.9M139.3 175.0L147.3 165.5M139.3 175.0L147.3 184.5M150.7 175.0L156.7 167.9M150.7 175.0L156.7 182.1M98.0 175.0L141.8 218.8M111.2 188.2L129.7 186.5M111.2 188.2L109.5 206.7M119.2 196.2L134.6 194.8M119.2 196.2L117.8 211.6M127.2 204.2L139.6 203.1M127.2 204.2L126.1 216.6M135.3 212.3L144.5 211.5M135.3 212.3L134.5 221.5M98.0 175.0L98.0 237.0M98.0 193.6L112.2 205.6M98.0 193.6L83.8 205.6M98.0 205.0L109.9 214.9M98.0 205.0L86.1 214.9M98.0 216.3L107.5 224.3M98.0 216.3L88.5 224.3M98.0 227.7L105.1 233.7M98.0 227.7L90.9 233.7M98.0 175.0L54.2 218.8M84.8 188.2L86.5 206.7M84.8 188.2L66.3 186.5M76.8 196.2L78.2 211.6M76.8 196.2L61.4 194.8M68.8 204.2L69.9 216.6M68.8 204.2L56.4 203.1M60.7 212.3L61.5 221.5M60.7 212.3L51.5 211.5M98.0 175.0L36.0 175.0M79.4 175.0L67.4 189.2M79.4 175.0L67.4 160.8M68.0 175.0L58.1 186.9M68.0 175.0L58.1 163.1M56.7 175.0L48.7 184.5M56.7 175.0L48.7 165.5M45.3 175.0L39.3 182.1M45.3 175.0L39.3 167.9M98.0 175.0L54.2 131.2M84.8 161.8L66.3 163.5M84.8 161.8L86.5 143.3M76.8 153.8L61.4 155.2M76.8 153.8L78.2 138.4M68.8 145.8L56.4 146.9M68.8 145.8L69.9 133.4M60.7 137.7L51.5 138.5M60.7 137.7L61.5 128.5" stroke="#8CABDF" stroke-width="5" stroke-linecap="round" fill="none"/><path d="M98.0 175.0L98.0 113.0M98.0 156.4L83.8 144.4M98.0 156.4L112.2 144.4M98.0 145.0L86.1 135.1M98.0 145.0L109.9 135.1M98.0 133.7L88.5 125.7M98.0 133.7L107.5 125.7M98.0 122.3L90.9 116.3M98.0 122.3L105.1 116.3M98.0 175.0L141.8 131.2M111.2 161.8L109.5 143.3M111.2 161.8L129.7 163.5M119.2 153.8L117.8 138.4M119.2 153.8L134.6 155.2M127.2 145.8L126.1 133.4M127.2 145.8L139.6 146.9M135.3 137.7L134.5 128.5M135.3 137.7L144.5 138.5M98.0 175.0L160.0 175.0M116.6 175.0L128.6 160.8M116.6 175.0L128.6 189.2M128.0 175.0L137.9 163.1M128.0 175.0L137.9 186.9M139.3 175.0L147.3 165.5M139.3 175.0L147.3 184.5M150.7 175.0L156.7 167.9M150.7 175.0L156.7 182.1M98.0 175.0L141.8 218.8M111.2 188.2L129.7 186.5M111.2 188.2L109.5 206.7M119.2 196.2L134.6 194.8M119.2 196.2L117.8 211.6M127.2 204.2L139.6 203.1M127.2 204.2L126.1 216.6M135.3 212.3L144.5 211.5M135.3 212.3L134.5 221.5M98.0 175.0L98.0 237.0M98.0 193.6L112.2 205.6M98.0 193.6L83.8 205.6M98.0 205.0L109.9 214.9M98.0 205.0L86.1 214.9M98.0 216.3L107.5 224.3M98.0 216.3L88.5 224.3M98.0 227.7L105.1 233.7M98.0 227.7L90.9 233.7M98.0 175.0L54.2 218.8M84.8 188.2L86.5 206.7M84.8 188.2L66.3 186.5M76.8 196.2L78.2 211.6M76.8 196.2L61.4 194.8M68.8 204.2L69.9 216.6M68.8 204.2L56.4 203.1M60.7 212.3L61.5 221.5M60.7 212.3L51.5 211.5M98.0 175.0L36.0 175.0M79.4 175.0L67.4 189.2M79.4 175.0L67.4 160.8M68.0 175.0L58.1 186.9M68.0 175.0L58.1 163.1M56.7 175.0L48.7 184.5M56.7 175.0L48.7 165.5M45.3 175.0L39.3 182.1M45.3 175.0L39.3 167.9M98.0 175.0L54.2 131.2M84.8 161.8L66.3 163.5M84.8 161.8L86.5 143.3M76.8 153.8L61.4 155.2M76.8 153.8L78.2 138.4M68.8 145.8L56.4 146.9M68.8 145.8L69.9 133.4M60.7 137.7L51.5 138.5M60.7 137.7L61.5 128.5" stroke="#5782C8" stroke-width="3" stroke-linecap="round" fill="none"/><path d="M155.0 255.0L155.0 229.0M155.0 247.2L149.0 242.2M155.0 247.2L161.0 242.2M155.0 240.1L150.5 236.3M155.0 240.1L159.5 236.3M155.0 232.9L152.0 230.4M155.0 232.9L158.0 230.4M155.0 255.0L177.5 242.0M161.8 251.1L163.1 243.4M161.8 251.1L169.1 253.8M167.9 247.5L169.0 241.8M167.9 247.5L173.4 249.5M174.1 243.9L174.8 240.1M174.1 243.9L177.8 245.3M155.0 255.0L177.5 268.0M161.8 258.9L169.1 256.2M161.8 258.9L163.1 266.6M167.9 262.5L173.4 260.5M167.9 262.5L169.0 268.2M174.1 266.1L177.8 264.7M174.1 266.1L174.8 269.9M155.0 255.0L155.0 281.0M155.0 262.8L161.0 267.8M155.0 262.8L149.0 267.8M155.0 269.9L159.5 273.7M155.0 269.9L150.5 273.7M155.0 277.1L158.0 279.6M155.0 277.1L152.0 279.6M155.0 255.0L132.5 268.0M148.2 258.9L146.9 266.6M148.2 258.9L140.9 256.2M142.1 262.5L141.0 268.2M142.1 262.5L136.6 260.5M135.9 266.1L135.2 269.9M135.9 266.1L132.2 264.7M155.0 255.0L132.5 242.0M148.2 251.1L140.9 253.8M148.2 251.1L146.9 243.4M142.1 247.5L136.6 249.5M142.1 247.5L141.0 241.8M135.9 243.9L132.2 245.3M135.9 243.9L135.2 240.1" stroke="#8AAAE0" stroke-width="3" stroke-linecap="round" fill="none"/><path d="M155.0 255.0L155.0 229.0M155.0 247.2L149.0 242.2M155.0 247.2L161.0 242.2M155.0 240.1L150.5 236.3M155.0 240.1L159.5 236.3M155.0 232.9L152.0 230.4M155.0 232.9L158.0 230.4M155.0 255.0L177.5 242.0M161.8 251.1L163.1 243.4M161.8 251.1L169.1 253.8M167.9 247.5L169.0 241.8M167.9 247.5L173.4 249.5M174.1 243.9L174.8 240.1M174.1 243.9L177.8 245.3M155.0 255.0L177.5 268.0M161.8 258.9L169.1 256.2M161.8 258.9L163.1 266.6M167.9 262.5L173.4 260.5M167.9 262.5L169.0 268.2M174.1 266.1L177.8 264.7M174.1 266.1L174.8 269.9M155.0 255.0L155.0 281.0M155.0 262.8L161.0 267.8M155.0 262.8L149.0 267.8M155.0 269.9L159.5 273.7M155.0 269.9L150.5 273.7M155.0 277.1L158.0 279.6M155.0 277.1L152.0 279.6M155.0 255.0L132.5 268.0M148.2 258.9L146.9 266.6M148.2 258.9L140.9 256.2M142.1 262.5L141.0 268.2M142.1 262.5L136.6 260.5M135.9 266.1L135.2 269.9M135.9 266.1L132.2 264.7M155.0 255.0L132.5 242.0M148.2 251.1L140.9 253.8M148.2 251.1L146.9 243.4M142.1 247.5L136.6 249.5M142.1 247.5L141.0 241.8M135.9 243.9L132.2 245.3M135.9 243.9L135.2 240.1" stroke="#5782C8" stroke-width="1" stroke-linecap="round" fill="none"/><path d="M92.0 278.0L98.7 252.9M94.0 270.5L89.5 264.1M94.0 270.5L101.1 267.2M95.9 263.6L92.5 258.8M95.9 263.6L101.2 261.1M97.7 256.7L95.5 253.5M97.7 256.7L101.3 255.0M92.0 278.0L117.1 271.3M99.5 276.0L102.8 268.9M99.5 276.0L105.9 280.5M106.4 274.1L108.9 268.8M106.4 274.1L111.2 277.5M113.3 272.3L115.0 268.7M113.3 272.3L116.5 274.5M92.0 278.0L110.4 296.4M97.5 283.5L105.3 282.8M97.5 283.5L96.8 291.3M102.6 288.6L108.4 288.1M102.6 288.6L102.1 294.4M107.6 293.6L111.5 293.3M107.6 293.6L107.3 297.5M92.0 278.0L85.3 303.1M90.0 285.5L94.5 291.9M90.0 285.5L82.9 288.8M88.1 292.4L91.5 297.2M88.1 292.4L82.8 294.9M86.3 299.3L88.5 302.5M86.3 299.3L82.7 301.0M92.0 278.0L66.9 284.7M84.5 280.0L81.2 287.1M84.5 280.0L78.1 275.5M77.6 281.9L75.1 287.2M77.6 281.9L72.8 278.5M70.7 283.7L69.0 287.3M70.7 283.7L67.5 281.5M92.0 278.0L73.6 259.6M86.5 272.5L78.7 273.2M86.5 272.5L87.2 264.7M81.4 267.4L75.6 267.9M81.4 267.4L81.9 261.6M76.4 262.4L72.5 262.7M76.4 262.4L76.7 258.5" stroke="#8CABDF" stroke-width="4" stroke-linecap="round" fill="none"/><path d="M92.0 278.0L98.7 252.9M94.0 270.5L89.5 264.1M94.0 270.5L101.1 267.2M95.9 263.6L92.5 258.8M95.9 263.6L101.2 261.1M97.7 256.7L95.5 253.5M97.7 256.7L101.3 255.0M92.0 278.0L117.1 271.3M99.5 276.0L102.8 268.9M99.5 276.0L105.9 280.5M106.4 274.1L108.9 268.8M106.4 274.1L111.2 277.5M113.3 272.3L115.0 268.7M113.3 272.3L116.5 274.5M92.0 278.0L110.4 296.4M97.5 283.5L105.3 282.8M97.5 283.5L96.8 291.3M102.6 288.6L108.4 288.1M102.6 288.6L102.1 294.4M107.6 293.6L111.5 293.3M107.6 293.6L107.3 297.5M92.0 278.0L85.3 303.1M90.0 285.5L94.5 291.9M90.0 285.5L82.9 288.8M88.1 292.4L91.5 297.2M88.1 292.4L82.8 294.9M86.3 299.3L88.5 302.5M86.3 299.3L82.7 301.0M92.0 278.0L66.9 284.7M84.5 280.0L81.2 287.1M84.5 280.0L78.1 275.5M77.6 281.9L75.1 287.2M77.6 281.9L72.8 278.5M70.7 283.7L69.0 287.3M70.7 283.7L67.5 281.5M92.0 278.0L73.6 259.6M86.5 272.5L78.7 273.2M86.5 272.5L87.2 264.7M81.4 267.4L75.6 267.9M81.4 267.4L81.9 261.6M76.4 262.4L72.5 262.7M76.4 262.4L76.7 258.5" stroke="#5782C8" stroke-width="2" stroke-linecap="round" fill="none"/><path d="M268.0 190.0L285.1 143.0M273.1 175.9L265.6 162.9M273.1 175.9L287.2 170.8M282.5 150.1L278.8 143.6M282.5 150.1L289.6 147.5M268.0 190.0L317.2 181.3M282.8 187.4L290.3 174.4M282.8 187.4L294.3 197.0M309.9 182.6L313.6 176.1M309.9 182.6L315.6 187.4M268.0 190.0L300.1 228.3M277.6 201.5L292.6 201.5M277.6 201.5L275.0 216.3M295.3 222.6L302.8 222.6M295.3 222.6L294.0 229.9M268.0 190.0L250.9 237.0M262.9 204.1L270.4 217.1M262.9 204.1L248.8 209.2M253.5 229.9L257.2 236.4M253.5 229.9L246.4 232.5M268.0 190.0L218.8 198.7M253.2 192.6L245.7 205.6M253.2 192.6L241.7 183.0M226.1 197.4L222.4 203.9M226.1 197.4L220.4 192.6M268.0 190.0L235.9 151.7M258.4 178.5L243.4 178.5M258.4 178.5L261.0 163.7M240.7 157.4L233.2 157.4M240.7 157.4L242.0 150.1" stroke="#7698D4" stroke-width="4" stroke-linecap="round" fill="none"/><path d="M268.0 190.0L285.1 143.0M273.1 175.9L265.6 162.9M273.1 175.9L287.2 170.8M282.5 150.1L278.8 143.6M282.5 150.1L289.6 147.5M268.0 190.0L317.2 181.3M282.8 187.4L290.3 174.4M282.8 187.4L294.3 197.0M309.9 182.6L313.6 176.1M309.9 182.6L315.6 187.4M268.0 190.0L300.1 228.3M277.6 201.5L292.6 201.5M277.6 201.5L275.0 216.3M295.3 222.6L302.8 222.6M295.3 222.6L294.0 229.9M268.0 190.0L250.9 237.0M262.9 204.1L270.4 217.1M262.9 204.1L248.8 209.2M253.5 229.9L257.2 236.4M253.5 229.9L246.4 232.5M268.0 190.0L218.8 198.7M253.2 192.6L245.7 205.6M253.2 192.6L241.7 183.0M226.1 197.4L222.4 203.9M226.1 197.4L220.4 192.6M268.0 190.0L235.9 151.7M258.4 178.5L243.4 178.5M258.4 178.5L261.0 163.7M240.7 157.4L233.2 157.4M240.7 157.4L242.0 150.1" stroke="#5782C8" stroke-width="2" stroke-linecap="round" fill="none"/><path d="M338.0 262.0L328.4 207.8M335.1 245.8L320.8 237.5M335.1 245.8L345.7 233.1M329.9 216.0L322.7 211.8M329.9 216.0L335.2 209.6M338.0 262.0L380.1 226.6M350.6 251.4L350.6 234.9M350.6 251.4L366.9 254.3M373.8 231.9L373.8 223.7M373.8 231.9L381.9 233.4M338.0 262.0L389.7 280.8M353.5 267.6L367.8 259.4M353.5 267.6L359.1 283.1M381.9 278.0L389.1 273.9M381.9 278.0L384.8 285.7M338.0 262.0L347.6 316.2M340.9 278.2L355.2 286.5M340.9 278.2L330.3 290.9M346.1 308.0L353.3 312.2M346.1 308.0L340.8 314.4M338.0 262.0L295.9 297.4M325.4 272.6L325.4 289.1M325.4 272.6L309.1 269.7M302.2 292.1L302.2 300.3M302.2 292.1L294.1 290.6M338.0 262.0L286.3 243.2M322.5 256.4L308.2 264.6M322.5 256.4L316.9 240.9M294.1 246.0L286.9 250.1M294.1 246.0L291.2 238.3" stroke="#7698D4" stroke-width="4" stroke-linecap="round" fill="none"/><path d="M338.0 262.0L328.4 207.8M335.1 245.8L320.8 237.5M335.1 245.8L345.7 233.1M329.9 216.0L322.7 211.8M329.9 216.0L335.2 209.6M338.0 262.0L380.1 226.6M350.6 251.4L350.6 234.9M350.6 251.4L366.9 254.3M373.8 231.9L373.8 223.7M373.8 231.9L381.9 233.4M338.0 262.0L389.7 280.8M353.5 267.6L367.8 259.4M353.5 267.6L359.1 283.1M381.9 278.0L389.1 273.9M381.9 278.0L384.8 285.7M338.0 262.0L347.6 316.2M340.9 278.2L355.2 286.5M340.9 278.2L330.3 290.9M346.1 308.0L353.3 312.2M346.1 308.0L340.8 314.4M338.0 262.0L295.9 297.4M325.4 272.6L325.4 289.1M325.4 272.6L309.1 269.7M302.2 292.1L302.2 300.3M302.2 292.1L294.1 290.6M338.0 262.0L286.3 243.2M322.5 256.4L308.2 264.6M322.5 256.4L316.9 240.9M294.1 246.0L286.9 250.1M294.1 246.0L291.2 238.3" stroke="#5782C8" stroke-width="2" stroke-linecap="round" fill="none"/><path d="M352.0 172.0L352.0 154.0M352.0 166.6L347.9 163.1M352.0 166.6L356.1 163.1M352.0 161.7L348.9 159.0M352.0 161.7L355.1 159.0M352.0 156.7L349.9 155.0M352.0 156.7L354.1 155.0M352.0 172.0L367.6 163.0M356.7 169.3L357.6 164.0M356.7 169.3L361.8 171.1M361.0 166.8L361.7 162.8M361.0 166.8L364.8 168.2M365.3 164.3L365.7 161.7M365.3 164.3L367.8 165.3M352.0 172.0L367.6 181.0M356.7 174.7L361.8 172.9M356.7 174.7L357.6 180.0M361.0 177.2L364.8 175.8M361.0 177.2L361.7 181.2M365.3 179.7L367.8 178.7M365.3 179.7L365.7 182.3M352.0 172.0L352.0 190.0M352.0 177.4L356.1 180.9M352.0 177.4L347.9 180.9M352.0 182.3L355.1 185.0M352.0 182.3L348.9 185.0M352.0 187.3L354.1 189.0M352.0 187.3L349.9 189.0M352.0 172.0L336.4 181.0M347.3 174.7L346.4 180.0M347.3 174.7L342.2 172.9M343.0 177.2L342.3 181.2M343.0 177.2L339.2 175.8M338.7 179.7L338.3 182.3M338.7 179.7L336.2 178.7M352.0 172.0L336.4 163.0M347.3 169.3L342.2 171.1M347.3 169.3L346.4 164.0M343.0 166.8L339.2 168.2M343.0 166.8L342.3 162.8M338.7 164.3L336.2 165.3M338.7 164.3L338.3 161.7" stroke="#86A6DC" stroke-width="3" stroke-linecap="round" fill="none"/><path d="M352.0 172.0L352.0 154.0M352.0 166.6L347.9 163.1M352.0 166.6L356.1 163.1M352.0 161.7L348.9 159.0M352.0 161.7L355.1 159.0M352.0 156.7L349.9 155.0M352.0 156.7L354.1 155.0M352.0 172.0L367.6 163.0M356.7 169.3L357.6 164.0M356.7 169.3L361.8 171.1M361.0 166.8L361.7 162.8M361.0 166.8L364.8 168.2M365.3 164.3L365.7 161.7M365.3 164.3L367.8 165.3M352.0 172.0L367.6 181.0M356.7 174.7L361.8 172.9M356.7 174.7L357.6 180.0M361.0 177.2L364.8 175.8M361.0 177.2L361.7 181.2M365.3 179.7L367.8 178.7M365.3 179.7L365.7 182.3M352.0 172.0L352.0 190.0M352.0 177.4L356.1 180.9M352.0 177.4L347.9 180.9M352.0 182.3L355.1 185.0M352.0 182.3L348.9 185.0M352.0 187.3L354.1 189.0M352.0 187.3L349.9 189.0M352.0 172.0L336.4 181.0M347.3 174.7L346.4 180.0M347.3 174.7L342.2 172.9M343.0 177.2L342.3 181.2M343.0 177.2L339.2 175.8M338.7 179.7L338.3 182.3M338.7 179.7L336.2 178.7M352.0 172.0L336.4 163.0M347.3 169.3L342.2 171.1M347.3 169.3L346.4 164.0M343.0 166.8L339.2 168.2M343.0 166.8L342.3 162.8M338.7 164.3L336.2 165.3M338.7 164.3L338.3 161.7" stroke="#5782C8" stroke-width="1" stroke-linecap="round" fill="none"/></g></svg><div class="tk" style="left:100px;top:153.6px;font-size:13.8px;letter-spacing:1.0px">QUILT DRAWING</div><div class="tk" style="left:224.5px;top:153.6px;font-size:13.8px;">- JAN. 29</div><div class="tk" style="left:281px;top:153.6px;font-size:13.8px;">at 3:30 pm</div><div class="tk" style="left:123px;top:183px;font-size:21px;line-height:30px;font-style:italic;opacity:0.92"><span style="font-size:31px">A</span>ntiques</div><div class="tk" style="left:208px;top:183px;font-size:21px;line-height:30px;font-style:italic;opacity:0.92;transform-origin:0 0;transform:scaleX(0.93)"><span style="font-size:31px">M</span>arketplace</div><div class="tk" style="left:163.5px;top:217.5px;font-size:11px;">Winter Show &amp; Sale 2006</div><div class="tk" style="left:181.5px;top:232.4px;font-size:11px;letter-spacing:0.15px">Jan. 27, 28, &amp; 29</div><div class="tk" style="left:125px;top:247px;font-size:11px;letter-spacing:0.05px">Davis County Fairgrounds, Farmington, Ut</div><div class="tk" style="left:145px;top:260.3px;font-size:11px;letter-spacing:0.04px">Silver Teapot Antiques / 390-1875</div><div class="tk" style="left:159px;top:277.8px;font-size:9.6px;letter-spacing:-0.48px">NEXT SHOW MAY 5, 6, &amp; 7, 2006</div><div class="tk" style="left:81.5px;top:293px;font-size:11.6px;letter-spacing:-0.1px">0001</div><div class="tk" style="left:271.5px;top:292px;font-size:11.5px;">ADMISSION $4.00</div><svg style="left:0;top:0" width="756" height="558" shape-rendering="crispEdges"><path d="M390.5 126V327" stroke="#000" stroke-width="1" stroke-dasharray="14 8.9"/></svg><div class="a" style="left:430px;top:140px;width:1px;height:138px;background:#4A78C2;"></div><div class="a" style="left:459px;top:140px;width:1px;height:125px;background:#4A78C2;"></div><div class="a" style="left:487px;top:140px;width:1px;height:169px;background:#4A78C2;"></div><div class="a" style="left:514px;top:140px;width:1px;height:134px;background:#4A78C2;"></div><div class="a" style="left:542px;top:140px;width:1px;height:136px;background:#4A78C2;"></div><div class="a" style="left:422px;top:310.5px;transform-origin:0 0;transform:rotate(-90deg);white-space:nowrap;color:#3E70C0;font-family:'Liberation Serif',serif;font-size:11px;line-height:1;">Name:</div><div class="a" style="left:452px;top:310.5px;transform-origin:0 0;transform:rotate(-90deg);white-space:nowrap;color:#3E70C0;font-family:'Liberation Serif',serif;font-size:10.5px;line-height:1;">Address:</div><div class="a" style="left:504.5px;top:311.5px;transform-origin:0 0;transform:rotate(-90deg);white-space:nowrap;color:#3E70C0;font-family:'Liberation Serif',serif;font-size:11px;line-height:1;letter-spacing:0.6px">Phone:</div><div class="a" style="left:533px;top:311.5px;transform-origin:0 0;transform:rotate(-90deg);white-space:nowrap;color:#3E70C0;font-family:'Liberation Serif',serif;font-size:11px;line-height:1;">email</div><div class="a" style="left:551px;top:241.5px;transform-origin:0 0;transform:rotate(-90deg);white-space:nowrap;color:#3E70C0;font-family:'Liberation Serif',serif;font-size:10px;line-height:1;font-family:'Liberation Sans',sans-serif">0001</div><div class="a" style="left:309.5px;top:270.5px;font-family:'Liberation Sans',sans-serif;font-weight:bold;font-size:20px;line-height:20px;letter-spacing:1.9px;color:rgba(165,165,182,0.8);-webkit-text-stroke:0.8px rgba(165,165,182,0.8);white-space:nowrap">download</div><svg style="left:0;top:0" width="756" height="558"><circle cx="433" cy="278.5" r="12.2" fill="rgba(175,175,180,0.5)"/><path d="M428 272q4-2 6 0q1 3-2 5q3 1 2 4q-2 3-6 1M436 270v12M436 277l5-5M437 276l5 6" stroke="rgba(255,255,255,0.65)" stroke-width="1.8" fill="none"/></svg><svg class="px" style="left:330px;top:348px" width="12" height="20" shape-rendering="crispEdges"><path fill="#000000" d="M0 0h1v1h-1zM0 1h2v1h-2zM0 2h1v1h-1zM2 2h1v1h-1zM0 3h1v1h-1zM3 3h1v1h-1zM0 4h1v1h-1zM4 4h1v1h-1zM0 5h1v1h-1zM5 5h1v1h-1zM0 6h1v1h-1zM6 6h1v1h-1zM0 7h1v1h-1zM7 7h1v1h-1zM0 8h1v1h-1zM8 8h1v1h-1zM0 9h1v1h-1zM9 9h1v1h-1zM0 10h1v1h-1zM10 10h1v1h-1zM0 11h1v1h-1zM7 11h5v1h-5zM0 12h1v1h-1zM4 12h1v1h-1zM7 12h1v1h-1zM0 13h1v1h-1zM3 13h1v1h-1zM5 13h1v1h-1zM8 13h1v1h-1zM0 14h1v1h-1zM2 14h1v1h-1zM5 14h1v1h-1zM8 14h1v1h-1zM0 15h2v1h-2zM6 15h1v1h-1zM9 15h1v1h-1zM0 16h1v1h-1zM6 16h1v1h-1zM9 16h1v1h-1zM7 17h1v1h-1zM10 17h1v1h-1zM7 18h1v1h-1zM10 18h1v1h-1zM8 19h2v1h-2z"/><path fill="#FFFFFF" d="M1 2h1v1h-1zM1 3h2v1h-2zM1 4h3v1h-3zM1 5h4v1h-4zM1 6h5v1h-5zM1 7h6v1h-6zM1 8h7v1h-7zM1 9h8v1h-8zM1 10h9v1h-9zM1 11h6v1h-6zM1 12h3v1h-3zM5 12h2v1h-2zM1 13h2v1h-2zM6 13h2v1h-2zM1 14h1v1h-1zM6 14h2v1h-2zM7 15h2v1h-2zM7 16h2v1h-2zM8 17h2v1h-2zM8 18h2v1h-2z"/></svg>
<!--BODY-->
</body></html>
